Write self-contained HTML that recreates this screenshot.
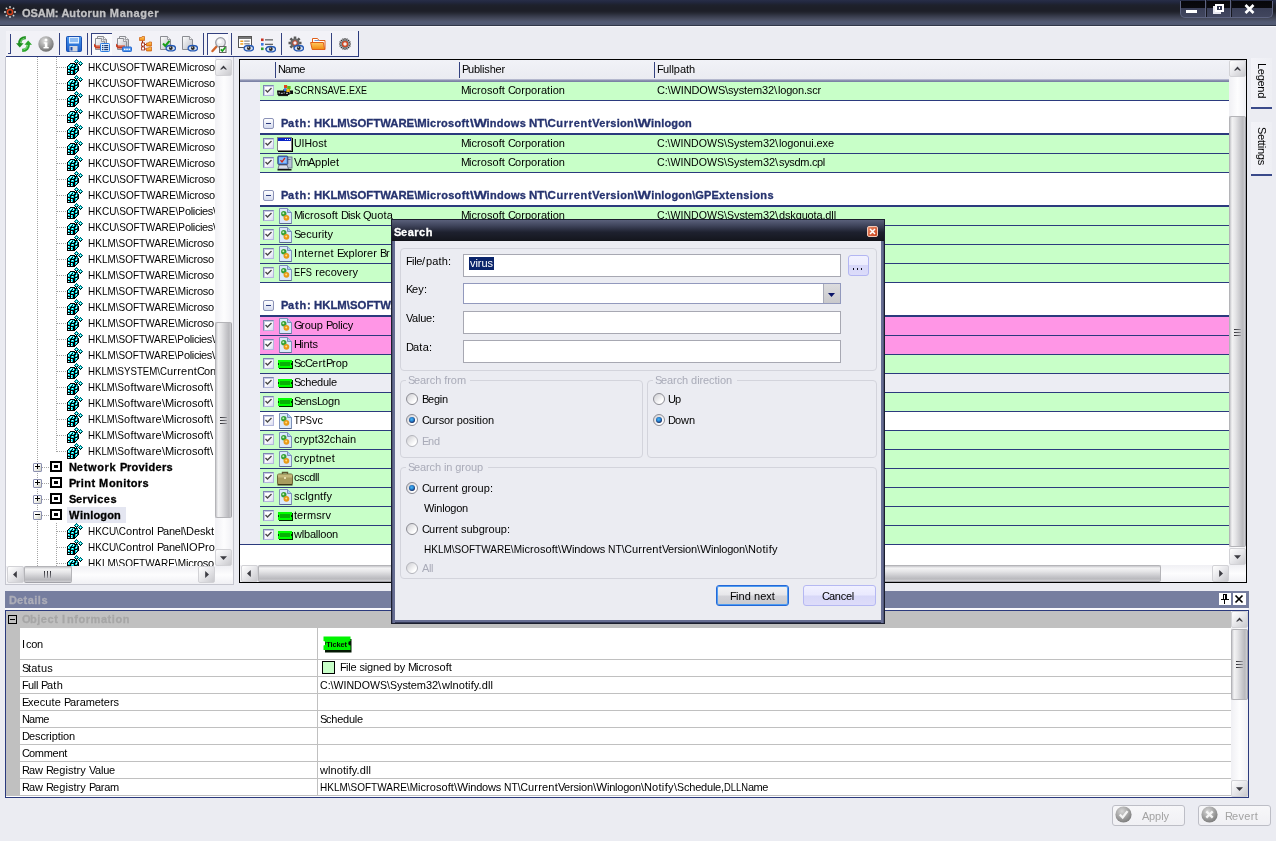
<!DOCTYPE html><html><head><meta charset="utf-8"><title>OSAM</title><style>
*{box-sizing:border-box}
html,body{margin:0;padding:0}
body{width:1276px;height:841px;overflow:hidden;background:#ebecf2;font-family:"Liberation Sans",sans-serif;font-size:11px;color:#000;position:relative;line-height:13px}
.a{position:absolute}
.t{position:absolute;white-space:nowrap;line-height:13px;height:13px;overflow:visible}
.b{font-weight:bold}
.clip{overflow:hidden}
.sbv{position:absolute;background:linear-gradient(90deg,#f0f0f4,#fdfdfe 50%,#f0f0f4)}
.sbh{position:absolute;background:linear-gradient(#f0f0f4,#fdfdfe 50%,#f0f0f4)}
.sbtn{position:absolute;background:linear-gradient(135deg,#ffffff 0%,#e9e9ec 45%,#c9c9cd 100%);border:1px solid #d2d2d6;border-radius:2px}
.thv{position:absolute;background:linear-gradient(90deg,#c6c6ca 0,#f3f3f4 14%,#e6e6e8 35%,#c6c6ca 70%,#b9b9bd 86%,#d0d0d4 100%);border:1px solid #b4b4b8;border-right-color:#a2a2a8;border-radius:2px}
.thh{position:absolute;background:linear-gradient(#c6c6ca 0,#f3f3f4 14%,#e6e6e8 35%,#c6c6ca 70%,#b9b9bd 86%,#d0d0d4 100%);border:1px solid #b4b4b8;border-bottom-color:#a2a2a8;border-radius:2px}
.reg{position:absolute;width:16px;height:16px}.reg::before{content:"";position:absolute;left:-1px;top:0;width:1px;height:1px;box-shadow:10px 0px 0 #006068,9px 1px 0 #006068,10px 1px 0 #00d8e0,11px 1px 0 #006068,8px 2px 0 #006068,9px 2px 0 #00d8e0,10px 2px 0 #e8ffff,11px 2px 0 #00d8e0,12px 2px 0 #006068,14px 2px 0 #006068,9px 3px 0 #000,10px 3px 0 #00d8e0,11px 3px 0 #000,13px 3px 0 #006068,14px 3px 0 #00d8e0,15px 3px 0 #006068,4px 4px 0 #000,5px 4px 0 #000,6px 4px 0 #000,7px 4px 0 #000,8px 4px 0 #000,10px 4px 0 #000,12px 4px 0 #006068,13px 4px 0 #00d8e0,14px 4px 0 #e8ffff,15px 4px 0 #00d8e0,16px 4px 0 #006068,3px 5px 0 #000,4px 5px 0 #00d8e0,5px 5px 0 #e8ffff,6px 5px 0 #00d8e0,7px 5px 0 #00d8e0,8px 5px 0 #000,9px 5px 0 #000,10px 5px 0 #000,11px 5px 0 #006068,13px 5px 0 #000,14px 5px 0 #00d8e0,15px 5px 0 #000,2px 6px 0 #000,3px 6px 0 #00d8e0,4px 6px 0 #e8ffff,5px 6px 0 #00d8e0,6px 6px 0 #000,7px 6px 0 #e8ffff,8px 6px 0 #00d8e0,9px 6px 0 #000,10px 6px 0 #00d8e0,11px 6px 0 #006068,14px 6px 0 #000,1px 7px 0 #000,2px 7px 0 #00d8e0,3px 7px 0 #00d8e0,4px 7px 0 #00d8e0,5px 7px 0 #000,6px 7px 0 #00d8e0,7px 7px 0 #00d8e0,8px 7px 0 #000,9px 7px 0 #000,10px 7px 0 #00d8e0,11px 7px 0 #006068,12px 7px 0 #000,1px 8px 0 #000,2px 8px 0 #e8ffff,3px 8px 0 #00d8e0,4px 8px 0 #000,5px 8px 0 #000,6px 8px 0 #000,7px 8px 0 #000,8px 8px 0 #000,9px 8px 0 #00d8e0,10px 8px 0 #e8ffff,11px 8px 0 #006068,12px 8px 0 #000,1px 9px 0 #000,2px 9px 0 #00d8e0,3px 9px 0 #00d8e0,4px 9px 0 #000,5px 9px 0 #00d8e0,6px 9px 0 #e8ffff,7px 9px 0 #00d8e0,8px 9px 0 #000,9px 9px 0 #00d8e0,10px 9px 0 #00d8e0,11px 9px 0 #000,12px 9px 0 #000,1px 10px 0 #000,2px 10px 0 #000,3px 10px 0 #000,4px 10px 0 #000,5px 10px 0 #00d8e0,6px 10px 0 #00d8e0,7px 10px 0 #00d8e0,8px 10px 0 #000,9px 10px 0 #000,10px 10px 0 #000,11px 10px 0 #006068,12px 10px 0 #000,1px 11px 0 #000,2px 11px 0 #e8ffff,3px 11px 0 #00d8e0,4px 11px 0 #000,5px 11px 0 #000,6px 11px 0 #000,7px 11px 0 #000,8px 11px 0 #000,9px 11px 0 #00d8e0,10px 11px 0 #e8ffff,11px 11px 0 #006068,12px 11px 0 #000,1px 12px 0 #000,2px 12px 0 #00d8e0,3px 12px 0 #00d8e0,4px 12px 0 #000,5px 12px 0 #e8ffff,6px 12px 0 #00d8e0,7px 12px 0 #000,8px 12px 0 #000,9px 12px 0 #00d8e0,10px 12px 0 #00d8e0,11px 12px 0 #000,1px 13px 0 #000,2px 13px 0 #000,3px 13px 0 #000,4px 13px 0 #000,5px 13px 0 #00d8e0,6px 13px 0 #00d8e0,7px 13px 0 #000,8px 13px 0 #000,9px 13px 0 #00d8e0,10px 13px 0 #000,1px 14px 0 #000,2px 14px 0 #e8ffff,3px 14px 0 #00d8e0,4px 14px 0 #000,5px 14px 0 #e8ffff,6px 14px 0 #00d8e0,7px 14px 0 #000,8px 14px 0 #000,9px 14px 0 #000,1px 15px 0 #000,2px 15px 0 #000,3px 15px 0 #000,4px 15px 0 #000,5px 15px 0 #000,6px 15px 0 #000,7px 15px 0 #000,8px 15px 0 #000}</style></head><body><div id="root" style="position:absolute;left:0;top:0;width:1276px;height:841px;will-change:transform"><div class="a" style="left:0px;top:0px;width:1276px;height:25px;background:linear-gradient(#282e48 0,#222840 8%,#1e212c 20%,#1d1f28 32%,#1d1f28 44%,#252832 52%,#363a4a 64%,#474c5e 76%,#525a74 88%,#525a72 100%)"></div>
<div class="t " style="left:22px;top:7px;color:#c2c2c4;font-weight:bold;-webkit-text-stroke:0.3px;"><span style="letter-spacing:-0.038px">OSAM:</span><span style="letter-spacing:-0.106px"> </span><span style="letter-spacing:-0.053px">A</span><span style="letter-spacing:0.362px">utorun </span><span style="letter-spacing:0.700px">M</span><span style="letter-spacing:0.555px">anager</span></div>
<svg class="a" style="left:4px;top:6px" width="12" height="12" viewBox="0 0 12 12"><g stroke="#d8d8d8" stroke-width="1.3"><path d="M6 0V12M0 6H12M1.8 1.8L10.2 10.2M10.2 1.8L1.8 10.2"/></g><circle cx="6" cy="6" r="4" fill="#2a2a2a"/><circle cx="6" cy="6" r="2.6" fill="none" stroke="#d8401c" stroke-width="1.5"/><circle cx="6" cy="6" r="1" fill="#111"/></svg>
<div class="a" style="left:1180px;top:1px;width:93px;height:17px;border:1px solid #5d6380;border-top:none;border-radius:0 0 5px 5px;background:linear-gradient(#07070a 0,#0a0a0e 7px,#3a3f57 7.5px,#41465e 100%)"></div>
<div class="a" style="left:1205px;top:0px;width:1px;height:17px;background:#5d6380"></div>
<div class="a" style="left:1206px;top:0px;width:1px;height:17px;background:#15161e"></div>
<div class="a" style="left:1230px;top:0px;width:1px;height:17px;background:#5d6380"></div>
<div class="a" style="left:1231px;top:0px;width:1px;height:17px;background:#15161e"></div>
<div class="a" style="left:1186px;top:10px;width:11px;height:3px;background:#fff"></div>
<svg class="a" style="left:1212px;top:3px" width="12" height="12" viewBox="0 0 12 12" shape-rendering="crispEdges"><rect x="1" y="3" width="8" height="8" fill="#e8e8f0"/><rect x="3" y="0.5" width="8.5" height="8.5" fill="#fff"/><rect x="5" y="2.5" width="4.5" height="4.5" fill="#343850"/><rect x="6.5" y="4" width="1.5" height="1.5" fill="#fff"/></svg>
<svg class="a" style="left:1244px;top:4px" width="11" height="10" viewBox="0 0 11 10"><path d="M1.5 1 L9.5 9 M9.5 1 L1.5 9" stroke="#fff" stroke-width="2.6"/></svg>
<div class="a" style="left:0px;top:25px;width:1276px;height:1px;background:#303648"></div>
<div class="a" style="left:0px;top:26px;width:1276px;height:1px;background:#f8f8fc"></div>
<div class="a" style="left:6px;top:31px;width:352px;height:26px;background:#f2f2f7"></div>
<div class="a" style="left:6px;top:56px;width:353px;height:1px;background:#2b3a7d"></div>
<div class="a" style="left:358px;top:31px;width:1px;height:26px;background:#2b3a7d"></div>
<div class="a" style="left:10px;top:34px;width:1px;height:20px;background:#33417f"></div>
<div class="a" style="left:8px;top:53px;width:3px;height:1px;background:#33417f"></div>
<div class="a" style="left:59px;top:33px;width:1px;height:22px;background:#33417f"></div>
<div class="a" style="left:87px;top:33px;width:1px;height:22px;background:#33417f"></div>
<div class="a" style="left:203px;top:33px;width:1px;height:22px;background:#33417f"></div>
<div class="a" style="left:231px;top:33px;width:1px;height:22px;background:#33417f"></div>
<div class="a" style="left:281px;top:33px;width:1px;height:22px;background:#33417f"></div>
<div class="a" style="left:331px;top:33px;width:1px;height:22px;background:#33417f"></div>
<div class="a" style="left:91px;top:33px;width:21px;height:22px;background:#f9f9fc;border-left:1px solid #33417f;border-top:1px solid #33417f"></div>
<div class="a" style="left:207px;top:33px;width:21px;height:22px;background:#f9f9fc;border-left:1px solid #33417f;border-top:1px solid #33417f"></div>
<svg width="0" height="0" style="position:absolute"><defs><linearGradient id="pgr" x1="0" y1="0" x2="1" y2="1"><stop offset="0" stop-color="#fff"/><stop offset="1" stop-color="#b9bcc4"/></linearGradient><radialGradient id="sph" cx=".4" cy=".3" r=".75"><stop offset="0" stop-color="#dcdcdc"/><stop offset="1" stop-color="#6a6a6a"/></radialGradient><linearGradient id="flo" x1="0" y1="0" x2="0" y2="1"><stop offset="0" stop-color="#4a9af0"/><stop offset="1" stop-color="#1a5cc8"/></linearGradient><linearGradient id="fol" x1="0" y1="0" x2="0" y2="1"><stop offset="0" stop-color="#ffc860"/><stop offset="1" stop-color="#f08a10"/></linearGradient></defs></svg>
<svg class="a" style="left:16px;top:36px" width="16" height="16" viewBox="0 0 16 16"><path d="M9.8 1.6 Q3.4 1.8 3.7 8.2" fill="none" stroke="#1f8f1f" stroke-width="3.2"/><path d="M0 7.3 H7.6 L3.8 11.6 Z" fill="#1f8f1f"/><path d="M6.2 14.4 Q12.6 14.2 12.3 7.8" fill="none" stroke="#2aa52a" stroke-width="3.2"/><path d="M8.5 8.7 H16 L12.2 4.4 Z" fill="#2aa52a"/><path d="M8.5 2.2 Q4.6 2.8 4.4 7" fill="none" stroke="#7ddc7d" stroke-width=".9"/><path d="M7.5 13.8 Q11.4 13.2 11.6 9" fill="none" stroke="#8ae48a" stroke-width=".9"/></svg>
<svg class="a" style="left:38px;top:36px" width="16" height="16" viewBox="0 0 16 16"><circle cx="8" cy="8" r="7.7" fill="url(#sph)"/><rect x="6.8" y="6.3" width="2.6" height="5.6" fill="#fff"/><rect x="5.7" y="6.3" width="2" height="1.3" fill="#fff"/><rect x="5.5" y="11" width="5.2" height="1.4" fill="#fff"/><circle cx="8" cy="3.9" r="1.5" fill="#fff"/></svg>
<svg class="a" style="left:66px;top:36px" width="16" height="16" viewBox="0 0 16 16"><rect x=".5" y=".5" width="15" height="15" rx="1" fill="url(#flo)" stroke="#1a4fb0"/><rect x="3" y="1" width="10" height="6.5" fill="#dfeeff"/><rect x="4" y="2.5" width="8" height="1" fill="#3c8ae8"/><rect x="4" y="4.5" width="8" height="1" fill="#3c8ae8"/><rect x="3.5" y="10" width="8" height="5.5" fill="#d5d8e0"/><rect x="4.5" y="11" width="2" height="3.5" fill="#1a4fb0"/></svg>
<svg class="a" style="left:94px;top:36px" width="16" height="16" viewBox="0 0 16 16"><path d="M3.5 0.5 H9.5 L12.5 3.5 V11.5 H3.5 Z" fill="url(#pgr)" stroke="#8a8c92"/><path d="M9.5 0.5 V3.5 H12.5" fill="#f4f4f4" stroke="#8a8c92" stroke-width=".8"/><path d="M1.5 2.5 H7.5 L10.5 5.5 V13.5 H1.5 Z" fill="url(#pgr)" stroke="#8a8c92"/><path d="M7.5 2.5 V5.5 H10.5" fill="#f4f4f4" stroke="#8a8c92" stroke-width=".8"/><path d="M0 7.5 L2 9.5 H9 V12.5 H2 L0 10.5 Z" fill="#c83c20"/><path d="M2 9.5 H9 V10.5 H2Z" fill="#e88a70"/><rect x="6.5" y="7.5" width="9" height="8" rx=".8" fill="#dceeff" stroke="#2a7ae0"/><g fill="#1c3c78"><rect x="8" y="9" width="1.4" height="1.2"/><rect x="10.2" y="9" width="4" height="1.2"/><rect x="8" y="11" width="1.4" height="1.2"/><rect x="10.2" y="11" width="4" height="1.2"/><rect x="8" y="13" width="1.4" height="1.2"/><rect x="10.2" y="13" width="4" height="1.2"/></g></svg>
<svg class="a" style="left:116px;top:36px" width="16" height="16" viewBox="0 0 16 16"><path d="M3.5 0.5 H9.5 L12.5 3.5 V11.5 H3.5 Z" fill="url(#pgr)" stroke="#8a8c92"/><path d="M9.5 0.5 V3.5 H12.5" fill="#f4f4f4" stroke="#8a8c92" stroke-width=".8"/><path d="M1.5 2.5 H7.5 L10.5 5.5 V13.5 H1.5 Z" fill="url(#pgr)" stroke="#8a8c92"/><path d="M7.5 2.5 V5.5 H10.5" fill="#f4f4f4" stroke="#8a8c92" stroke-width=".8"/><path d="M0 7.5 L2 9.5 H9 V12.5 H2 L0 10.5 Z" fill="#c83c20"/><path d="M2 9.5 H9 V10.5 H2Z" fill="#e88a70"/><rect x="6.5" y="11" width="9" height="4.5" rx=".8" fill="#4a94ec" stroke="#2a6ad0"/><g fill="#fff"><rect x="8" y="12.6" width="1.5" height="1.5"/><rect x="10.3" y="12.6" width="1.5" height="1.5"/><rect x="12.6" y="12.6" width="1.5" height="1.5"/></g></svg>
<svg class="a" style="left:138px;top:36px" width="16" height="16" viewBox="0 0 16 16"><path d="M4.5 4.5 V13 H8 M4.5 8.5 H8" fill="none" stroke="#a02810" stroke-width="1.1"/><rect x="3.6" y="7" width="3" height="3" fill="#fff" stroke="#a02810" stroke-width=".8"/><rect x="3.6" y="11" width="3" height="3" fill="#fff" stroke="#a02810" stroke-width=".8"/><path d="M1.5 1.5 H3.5 L4.1 0.5 H6.5 V4.5 H1.5 Z" fill="url(#fol)" stroke="#c85a10" stroke-width=".7"/><path d="M8.5 7 H10.5 L11.1 6 H13.5 V10 H8.5 Z" fill="url(#fol)" stroke="#c85a10" stroke-width=".7"/><path d="M8.5 12 H10.5 L11.1 11 H13.5 V15 H8.5 Z" fill="url(#fol)" stroke="#c85a10" stroke-width=".7"/></svg>
<svg class="a" style="left:160px;top:36px" width="16" height="16" viewBox="0 0 16 16"><path d="M0.5 0.5 H7.5 L10.5 3.5 V13.5 H0.5 Z" fill="url(#pgr)" stroke="#8a8c92"/><path d="M7.5 0.5 V3.5 H10.5" fill="#f4f4f4" stroke="#8a8c92" stroke-width=".8"/><path d="M3 7.5 L5.3 10 L9.5 4.8" fill="none" stroke="#18a018" stroke-width="2"/><ellipse cx="10.8" cy="12.2" rx="4.7" ry="2.7" fill="#d4e2f6" stroke="#2458b4" stroke-width="1.3"/><circle cx="10.8" cy="12.0" r="1.9" fill="#2a2a2a"/><circle cx="10.3" cy="11.299999999999999" r=".7" fill="#c8c8c8"/></svg>
<svg class="a" style="left:182px;top:36px" width="16" height="16" viewBox="0 0 16 16"><path d="M0.5 0.5 H7.5 L10.5 3.5 V13.5 H0.5 Z" fill="url(#pgr)" stroke="#8a8c92"/><path d="M7.5 0.5 V3.5 H10.5" fill="#f4f4f4" stroke="#8a8c92" stroke-width=".8"/><ellipse cx="10.8" cy="12.2" rx="4.7" ry="2.7" fill="#d4e2f6" stroke="#2458b4" stroke-width="1.3"/><circle cx="10.8" cy="12.0" r="1.9" fill="#2a2a2a"/><circle cx="10.3" cy="11.299999999999999" r=".7" fill="#c8c8c8"/></svg>
<svg class="a" style="left:211px;top:37px" width="16" height="16" viewBox="0 0 16 16"><path d="M1.5 14 L6.5 8.5" stroke="#d0642a" stroke-width="2.4" stroke-linecap="round"/><circle cx="9.5" cy="5.5" r="4.8" fill="#e9eaee" stroke="#9a9ca4" stroke-width="1.3"/><circle cx="8.6" cy="4.4" r="2.2" fill="#fff" opacity=".8"/><rect x="8.5" y="9.5" width="6.5" height="6" fill="#f4f4f4" stroke="#666" stroke-width="1"/><path d="M9.8 12.3 L11.4 14 L14.4 10.3" fill="none" stroke="#18a018" stroke-width="1.7"/></svg>
<svg class="a" style="left:238px;top:36px" width="16" height="16" viewBox="0 0 16 16"><rect x=".5" y=".5" width="13" height="11" fill="#fff" stroke="#555"/><rect x="1" y="1" width="12" height="2" fill="#777"/><rect x="2.3" y="4.5" width="3" height="1.5" fill="#f0a020"/><rect x="6.2" y="4.5" width="5.5" height="1.2" fill="#888"/><rect x="2.3" y="7.2" width="3" height="1.5" fill="#f0a020"/><rect x="6.2" y="7.2" width="5.5" height="1.2" fill="#888"/><ellipse cx="10.8" cy="12.2" rx="4.7" ry="2.7" fill="#d4e2f6" stroke="#2458b4" stroke-width="1.3"/><circle cx="10.8" cy="12.0" r="1.9" fill="#2a2a2a"/><circle cx="10.3" cy="11.299999999999999" r=".7" fill="#c8c8c8"/></svg>
<svg class="a" style="left:260px;top:37px" width="16" height="16" viewBox="0 0 16 16"><rect x="1" y="1.5" width="2.6" height="2.6" fill="#c83020"/><rect x="5" y="2.2" width="8" height="1.3" fill="#666"/><rect x="1" y="6" width="2.6" height="2.6" fill="#3a78e0"/><rect x="5" y="6.7" width="8" height="1.3" fill="#666"/><rect x="1" y="10.5" width="2.6" height="2.6" fill="#30a030"/><rect x="5" y="11.2" width="3" height="1.3" fill="#666"/><ellipse cx="10.8" cy="12.2" rx="4.7" ry="2.7" fill="#d4e2f6" stroke="#2458b4" stroke-width="1.3"/><circle cx="10.8" cy="12.0" r="1.9" fill="#2a2a2a"/><circle cx="10.3" cy="11.299999999999999" r=".7" fill="#c8c8c8"/></svg>
<svg class="a" style="left:288px;top:36px" width="16" height="16" viewBox="0 0 16 16"><g stroke="#5a5a5a" stroke-width="2.6"><path d="M7 .5V13.5M.5 7H13.5M2.4 2.4L11.6 11.6M11.6 2.4L2.4 11.6"/></g><circle cx="7" cy="7" r="4.6" fill="#6a6a6a"/><circle cx="7" cy="7" r="2.2" fill="#f2f2f7" stroke="#c83c20" stroke-width="1"/><ellipse cx="10.8" cy="12.2" rx="4.7" ry="2.7" fill="#d4e2f6" stroke="#2458b4" stroke-width="1.3"/><circle cx="10.8" cy="12.0" r="1.9" fill="#2a2a2a"/><circle cx="10.3" cy="11.299999999999999" r=".7" fill="#c8c8c8"/></svg>
<svg class="a" style="left:310px;top:36px" width="16" height="16" viewBox="0 0 16 16"><path d="M2.5 2.5 H7.5 L9 4.5 H15 V13.5 H2.5 Z" fill="#fff" stroke="#e0601a"/><rect x="4.5" y="4" width="5" height="1" fill="#7a9ad0"/><path d="M0.6 6.5 H13.4 L14.6 13.5 H2.2 Z" fill="url(#fol)" stroke="#e0601a"/></svg>
<svg class="a" style="left:339px;top:38px" width="12" height="12" viewBox="0 0 12 12"><g stroke="#2c2c2c" stroke-width="1.1" stroke-dasharray="2 8 2 0"><path d="M6 0V12M0 6H12M1.8 1.8L10.2 10.2M10.2 1.8L1.8 10.2M3.7 .5L8.3 11.5M8.3 .5L3.7 11.5M.5 3.7L11.5 8.3M.5 8.3L11.5 3.7"/></g><circle cx="6" cy="6" r="3.9" fill="#4a4a4a" opacity=".75"/><circle cx="6" cy="6" r="2.4" fill="#f4eeea" stroke="#d8441c" stroke-width="1.3"/></svg>
<div class="a" style="left:5px;top:57px;width:229px;height:528px;background:#fff;border:1px solid #c5c6cf;border-top:none"></div>
<div id="tree" class="a clip" style="left:6px;top:57px;width:209px;height:509px"><div class="a" style="left:31px;top:0px;width:1px;height:509px;background:repeating-linear-gradient(#a4a4a4 0 1px,transparent 1px 2px)"></div><div class="a" style="left:50px;top:0px;width:1px;height:395px;background:repeating-linear-gradient(#a4a4a4 0 1px,transparent 1px 2px)"></div><div class="a" style="left:51px;top:10px;width:10px;height:1px;background:repeating-linear-gradient(90deg,#a4a4a4 0 1px,transparent 1px 2px)"></div><i class="reg" style="left:61px;top:2px"></i><div class="t" style="left:82px;top:4px;"><span style="display:inline-block;width:99.00px;transform:scaleX(0.9135);transform-origin:0 0">HKCU\SOFTWARE\M</span><span style="letter-spacing:-0.224px">icroso</span></div><div class="a" style="left:51px;top:26px;width:10px;height:1px;background:repeating-linear-gradient(90deg,#a4a4a4 0 1px,transparent 1px 2px)"></div><i class="reg" style="left:61px;top:18px"></i><div class="t" style="left:82px;top:20px;"><span style="display:inline-block;width:99.00px;transform:scaleX(0.9135);transform-origin:0 0">HKCU\SOFTWARE\M</span><span style="letter-spacing:-0.224px">icroso</span></div><div class="a" style="left:51px;top:42px;width:10px;height:1px;background:repeating-linear-gradient(90deg,#a4a4a4 0 1px,transparent 1px 2px)"></div><i class="reg" style="left:61px;top:34px"></i><div class="t" style="left:82px;top:36px;"><span style="display:inline-block;width:99.00px;transform:scaleX(0.9135);transform-origin:0 0">HKCU\SOFTWARE\M</span><span style="letter-spacing:-0.224px">icroso</span></div><div class="a" style="left:51px;top:58px;width:10px;height:1px;background:repeating-linear-gradient(90deg,#a4a4a4 0 1px,transparent 1px 2px)"></div><i class="reg" style="left:61px;top:50px"></i><div class="t" style="left:82px;top:52px;"><span style="display:inline-block;width:99.00px;transform:scaleX(0.9135);transform-origin:0 0">HKCU\SOFTWARE\M</span><span style="letter-spacing:-0.224px">icroso</span></div><div class="a" style="left:51px;top:74px;width:10px;height:1px;background:repeating-linear-gradient(90deg,#a4a4a4 0 1px,transparent 1px 2px)"></div><i class="reg" style="left:61px;top:66px"></i><div class="t" style="left:82px;top:68px;"><span style="display:inline-block;width:99.00px;transform:scaleX(0.9135);transform-origin:0 0">HKCU\SOFTWARE\M</span><span style="letter-spacing:-0.224px">icroso</span></div><div class="a" style="left:51px;top:90px;width:10px;height:1px;background:repeating-linear-gradient(90deg,#a4a4a4 0 1px,transparent 1px 2px)"></div><i class="reg" style="left:61px;top:82px"></i><div class="t" style="left:82px;top:84px;"><span style="display:inline-block;width:99.00px;transform:scaleX(0.9135);transform-origin:0 0">HKCU\SOFTWARE\M</span><span style="letter-spacing:-0.224px">icroso</span></div><div class="a" style="left:51px;top:106px;width:10px;height:1px;background:repeating-linear-gradient(90deg,#a4a4a4 0 1px,transparent 1px 2px)"></div><i class="reg" style="left:61px;top:98px"></i><div class="t" style="left:82px;top:100px;"><span style="display:inline-block;width:99.00px;transform:scaleX(0.9135);transform-origin:0 0">HKCU\SOFTWARE\M</span><span style="letter-spacing:-0.224px">icroso</span></div><div class="a" style="left:51px;top:122px;width:10px;height:1px;background:repeating-linear-gradient(90deg,#a4a4a4 0 1px,transparent 1px 2px)"></div><i class="reg" style="left:61px;top:114px"></i><div class="t" style="left:82px;top:116px;"><span style="display:inline-block;width:99.00px;transform:scaleX(0.9135);transform-origin:0 0">HKCU\SOFTWARE\M</span><span style="letter-spacing:-0.224px">icroso</span></div><div class="a" style="left:51px;top:138px;width:10px;height:1px;background:repeating-linear-gradient(90deg,#a4a4a4 0 1px,transparent 1px 2px)"></div><i class="reg" style="left:61px;top:130px"></i><div class="t" style="left:82px;top:132px;"><span style="display:inline-block;width:99.00px;transform:scaleX(0.9135);transform-origin:0 0">HKCU\SOFTWARE\M</span><span style="letter-spacing:-0.224px">icroso</span></div><div class="a" style="left:51px;top:154px;width:10px;height:1px;background:repeating-linear-gradient(90deg,#a4a4a4 0 1px,transparent 1px 2px)"></div><i class="reg" style="left:61px;top:146px"></i><div class="t" style="left:82px;top:148px;"><span style="display:inline-block;width:97.00px;transform:scaleX(0.9103);transform-origin:0 0">HKCU\SOFTWARE\P</span><span style="letter-spacing:-0.366px">olicies</span><span style="letter-spacing:0.938px">\</span></div><div class="a" style="left:51px;top:170px;width:10px;height:1px;background:repeating-linear-gradient(90deg,#a4a4a4 0 1px,transparent 1px 2px)"></div><i class="reg" style="left:61px;top:162px"></i><div class="t" style="left:82px;top:164px;"><span style="display:inline-block;width:97.00px;transform:scaleX(0.9103);transform-origin:0 0">HKCU\SOFTWARE\P</span><span style="letter-spacing:-0.366px">olicies</span><span style="letter-spacing:0.938px">\</span></div><div class="a" style="left:51px;top:186px;width:10px;height:1px;background:repeating-linear-gradient(90deg,#a4a4a4 0 1px,transparent 1px 2px)"></div><i class="reg" style="left:61px;top:178px"></i><div class="t" style="left:82px;top:180px;"><span style="display:inline-block;width:98.00px;transform:scaleX(0.9092);transform-origin:0 0">HKLM\SOFTWARE\M</span><span style="letter-spacing:-0.224px">icroso</span></div><div class="a" style="left:51px;top:202px;width:10px;height:1px;background:repeating-linear-gradient(90deg,#a4a4a4 0 1px,transparent 1px 2px)"></div><i class="reg" style="left:61px;top:194px"></i><div class="t" style="left:82px;top:196px;"><span style="display:inline-block;width:98.00px;transform:scaleX(0.9092);transform-origin:0 0">HKLM\SOFTWARE\M</span><span style="letter-spacing:-0.224px">icroso</span></div><div class="a" style="left:51px;top:218px;width:10px;height:1px;background:repeating-linear-gradient(90deg,#a4a4a4 0 1px,transparent 1px 2px)"></div><i class="reg" style="left:61px;top:210px"></i><div class="t" style="left:82px;top:212px;"><span style="display:inline-block;width:98.00px;transform:scaleX(0.9092);transform-origin:0 0">HKLM\SOFTWARE\M</span><span style="letter-spacing:-0.224px">icroso</span></div><div class="a" style="left:51px;top:234px;width:10px;height:1px;background:repeating-linear-gradient(90deg,#a4a4a4 0 1px,transparent 1px 2px)"></div><i class="reg" style="left:61px;top:226px"></i><div class="t" style="left:82px;top:228px;"><span style="display:inline-block;width:98.00px;transform:scaleX(0.9092);transform-origin:0 0">HKLM\SOFTWARE\M</span><span style="letter-spacing:-0.224px">icroso</span></div><div class="a" style="left:51px;top:250px;width:10px;height:1px;background:repeating-linear-gradient(90deg,#a4a4a4 0 1px,transparent 1px 2px)"></div><i class="reg" style="left:61px;top:242px"></i><div class="t" style="left:82px;top:244px;"><span style="display:inline-block;width:98.00px;transform:scaleX(0.9092);transform-origin:0 0">HKLM\SOFTWARE\M</span><span style="letter-spacing:-0.224px">icroso</span></div><div class="a" style="left:51px;top:266px;width:10px;height:1px;background:repeating-linear-gradient(90deg,#a4a4a4 0 1px,transparent 1px 2px)"></div><i class="reg" style="left:61px;top:258px"></i><div class="t" style="left:82px;top:260px;"><span style="display:inline-block;width:98.00px;transform:scaleX(0.9092);transform-origin:0 0">HKLM\SOFTWARE\M</span><span style="letter-spacing:-0.224px">icroso</span></div><div class="a" style="left:51px;top:282px;width:10px;height:1px;background:repeating-linear-gradient(90deg,#a4a4a4 0 1px,transparent 1px 2px)"></div><i class="reg" style="left:61px;top:274px"></i><div class="t" style="left:82px;top:276px;"><span style="display:inline-block;width:96.00px;transform:scaleX(0.9059);transform-origin:0 0">HKLM\SOFTWARE\P</span><span style="letter-spacing:-0.366px">olicies</span><span style="letter-spacing:0.938px">\</span></div><div class="a" style="left:51px;top:298px;width:10px;height:1px;background:repeating-linear-gradient(90deg,#a4a4a4 0 1px,transparent 1px 2px)"></div><i class="reg" style="left:61px;top:290px"></i><div class="t" style="left:82px;top:292px;"><span style="display:inline-block;width:96.00px;transform:scaleX(0.9059);transform-origin:0 0">HKLM\SOFTWARE\P</span><span style="letter-spacing:-0.366px">olicies</span><span style="letter-spacing:0.938px">\</span></div><div class="a" style="left:51px;top:314px;width:10px;height:1px;background:repeating-linear-gradient(90deg,#a4a4a4 0 1px,transparent 1px 2px)"></div><i class="reg" style="left:61px;top:306px"></i><div class="t" style="left:82px;top:308px;"><span style="display:inline-block;width:79.00px;transform:scaleX(0.8790);transform-origin:0 0">HKLM\SYSTEM\C</span><span style="letter-spacing:0.208px">urrent</span><span style="letter-spacing:-0.938px">C</span><span style="letter-spacing:-0.125px">on</span></div><div class="a" style="left:51px;top:330px;width:10px;height:1px;background:repeating-linear-gradient(90deg,#a4a4a4 0 1px,transparent 1px 2px)"></div><i class="reg" style="left:61px;top:322px"></i><div class="t" style="left:82px;top:324px;"><span style="display:inline-block;width:36.00px;transform:scaleX(0.8787);transform-origin:0 0">HKLM\S</span><span style="letter-spacing:0.272px">oftware</span><span style="letter-spacing:-0.109px">\M</span><span style="letter-spacing:0.066px">icrosoft</span><span style="letter-spacing:0.938px">\</span></div><div class="a" style="left:51px;top:346px;width:10px;height:1px;background:repeating-linear-gradient(90deg,#a4a4a4 0 1px,transparent 1px 2px)"></div><i class="reg" style="left:61px;top:338px"></i><div class="t" style="left:82px;top:340px;"><span style="display:inline-block;width:36.00px;transform:scaleX(0.8787);transform-origin:0 0">HKLM\S</span><span style="letter-spacing:0.272px">oftware</span><span style="letter-spacing:-0.109px">\M</span><span style="letter-spacing:0.066px">icrosoft</span><span style="letter-spacing:0.938px">\</span></div><div class="a" style="left:51px;top:362px;width:10px;height:1px;background:repeating-linear-gradient(90deg,#a4a4a4 0 1px,transparent 1px 2px)"></div><i class="reg" style="left:61px;top:354px"></i><div class="t" style="left:82px;top:356px;"><span style="display:inline-block;width:36.00px;transform:scaleX(0.8787);transform-origin:0 0">HKLM\S</span><span style="letter-spacing:0.272px">oftware</span><span style="letter-spacing:-0.109px">\M</span><span style="letter-spacing:0.066px">icrosoft</span><span style="letter-spacing:0.938px">\</span></div><div class="a" style="left:51px;top:378px;width:10px;height:1px;background:repeating-linear-gradient(90deg,#a4a4a4 0 1px,transparent 1px 2px)"></div><i class="reg" style="left:61px;top:370px"></i><div class="t" style="left:82px;top:372px;"><span style="display:inline-block;width:36.00px;transform:scaleX(0.8787);transform-origin:0 0">HKLM\S</span><span style="letter-spacing:0.272px">oftware</span><span style="letter-spacing:-0.109px">\M</span><span style="letter-spacing:0.066px">icrosoft</span><span style="letter-spacing:0.938px">\</span></div><div class="a" style="left:51px;top:394px;width:10px;height:1px;background:repeating-linear-gradient(90deg,#a4a4a4 0 1px,transparent 1px 2px)"></div><i class="reg" style="left:61px;top:386px"></i><div class="t" style="left:82px;top:388px;"><span style="display:inline-block;width:36.00px;transform:scaleX(0.8787);transform-origin:0 0">HKLM\S</span><span style="letter-spacing:0.272px">oftware</span><span style="letter-spacing:-0.109px">\M</span><span style="letter-spacing:0.066px">icrosoft</span><span style="letter-spacing:0.938px">\</span></div><div class="a" style="left:36px;top:410px;width:8px;height:1px;background:repeating-linear-gradient(90deg,#a4a4a4 0 1px,transparent 1px 2px)"></div><div class="a" style="left:27px;top:406px;width:9px;height:9px;border:1px solid #8b90b0;border-radius:1px;background:linear-gradient(135deg,#fff 30%,#cfd0c4)"><div class="a" style="left:-1px;top:-1px;width:9px;height:9px"><div class="a" style="left:2px;top:3px;width:5px;height:1px;background:#000"></div><div class="a" style="left:4px;top:1px;width:1px;height:5px;background:#000"></div></div></div><div class="a" style="left:44px;top:404px;width:12px;height:11px;border:2px solid #000;background:#fff"><div class="a" style="left:2px;top:2px;width:4px;height:3px;background:#000"></div></div><div class="t" style="left:63px;top:404px;font-weight:bold;-webkit-text-stroke:0.3px;"><span style="letter-spacing:-0.088px">N</span><span style="letter-spacing:0.663px">etwork </span><span style="letter-spacing:-0.476px">P</span><span style="letter-spacing:0.334px">roviders</span></div><div class="a" style="left:36px;top:426px;width:8px;height:1px;background:repeating-linear-gradient(90deg,#a4a4a4 0 1px,transparent 1px 2px)"></div><div class="a" style="left:27px;top:422px;width:9px;height:9px;border:1px solid #8b90b0;border-radius:1px;background:linear-gradient(135deg,#fff 30%,#cfd0c4)"><div class="a" style="left:-1px;top:-1px;width:9px;height:9px"><div class="a" style="left:2px;top:3px;width:5px;height:1px;background:#000"></div><div class="a" style="left:4px;top:1px;width:1px;height:5px;background:#000"></div></div></div><div class="a" style="left:44px;top:420px;width:12px;height:11px;border:2px solid #000;background:#fff"><div class="a" style="left:2px;top:2px;width:4px;height:3px;background:#000"></div></div><div class="t" style="left:63px;top:420px;font-weight:bold;-webkit-text-stroke:0.3px;"><span style="letter-spacing:-0.344px">P</span><span style="letter-spacing:0.444px">rint </span><span style="letter-spacing:0.844px">M</span><span style="letter-spacing:0.388px">onitors</span></div><div class="a" style="left:36px;top:442px;width:8px;height:1px;background:repeating-linear-gradient(90deg,#a4a4a4 0 1px,transparent 1px 2px)"></div><div class="a" style="left:27px;top:438px;width:9px;height:9px;border:1px solid #8b90b0;border-radius:1px;background:linear-gradient(135deg,#fff 30%,#cfd0c4)"><div class="a" style="left:-1px;top:-1px;width:9px;height:9px"><div class="a" style="left:2px;top:3px;width:5px;height:1px;background:#000"></div><div class="a" style="left:4px;top:1px;width:1px;height:5px;background:#000"></div></div></div><div class="a" style="left:44px;top:436px;width:12px;height:11px;border:2px solid #000;background:#fff"><div class="a" style="left:2px;top:2px;width:4px;height:3px;background:#000"></div></div><div class="t" style="left:63px;top:436px;font-weight:bold;-webkit-text-stroke:0.3px;"><span style="letter-spacing:-0.344px">S</span><span style="letter-spacing:0.433px">ervices</span></div><div class="a" style="left:36px;top:458px;width:8px;height:1px;background:repeating-linear-gradient(90deg,#a4a4a4 0 1px,transparent 1px 2px)"></div><div class="a" style="left:27px;top:454px;width:9px;height:9px;border:1px solid #8b90b0;border-radius:1px;background:linear-gradient(135deg,#fff 30%,#cfd0c4)"><div class="a" style="left:-1px;top:-1px;width:9px;height:9px"><div class="a" style="left:2px;top:3px;width:5px;height:1px;background:#000"></div></div></div><div class="a" style="left:44px;top:452px;width:12px;height:11px;border:2px solid #000;background:#fff"><div class="a" style="left:2px;top:2px;width:4px;height:3px;background:#000"></div></div><div class="a" style="left:61px;top:450px;width:59px;height:16px;background:#e4e6f1"></div><div class="t" style="left:63px;top:452px;font-weight:bold;-webkit-text-stroke:0.3px;"><span style="letter-spacing:0.625px">W</span><span style="letter-spacing:0.183px">inlogon</span></div><div class="a" style="left:50px;top:466px;width:1px;height:43px;background:repeating-linear-gradient(#a4a4a4 0 1px,transparent 1px 2px)"></div><div class="a" style="left:51px;top:474px;width:10px;height:1px;background:repeating-linear-gradient(90deg,#a4a4a4 0 1px,transparent 1px 2px)"></div><i class="reg" style="left:61px;top:466px"></i><div class="t" style="left:82px;top:468px;"><span style="display:inline-block;width:38.00px;transform:scaleX(0.9014);transform-origin:0 0">HKCU\C</span><span style="letter-spacing:0.058px">ontrol </span><span style="letter-spacing:-1.344px">P</span><span style="letter-spacing:-0.203px">anel</span><span style="letter-spacing:0.000px">\D</span><span style="letter-spacing:-0.047px">eskt</span></div><div class="a" style="left:51px;top:490px;width:10px;height:1px;background:repeating-linear-gradient(90deg,#a4a4a4 0 1px,transparent 1px 2px)"></div><i class="reg" style="left:61px;top:482px"></i><div class="t" style="left:82px;top:484px;"><span style="display:inline-block;width:38.00px;transform:scaleX(0.9014);transform-origin:0 0">HKCU\C</span><span style="letter-spacing:0.058px">ontrol </span><span style="letter-spacing:-1.344px">P</span><span style="letter-spacing:-0.203px">anel</span><span style="letter-spacing:-0.008px">\IOP</span><span style="letter-spacing:0.109px">ro</span></div><div class="a" style="left:51px;top:506px;width:10px;height:1px;background:repeating-linear-gradient(90deg,#a4a4a4 0 1px,transparent 1px 2px)"></div><i class="reg" style="left:61px;top:498px"></i><div class="t" style="left:82px;top:500px;"><span style="display:inline-block;width:98.00px;transform:scaleX(0.9092);transform-origin:0 0">HKLM\SOFTWARE\M</span><span style="letter-spacing:-0.224px">icroso</span></div></div>
<div class="sbv" style="left:215px;top:57px;width:18px;height:509px"></div>
<div class="sbtn" style="left:215px;top:59px;width:17px;height:17px"><svg class="a" style="left:50%;top:50%;margin:-3px 0 0 -4px" width="7" height="5" viewBox="0 0 7 5"><path d="M0 4.4 L3.5 0.6 L7 4.4 L5.4 4.6 L3.5 3.1 L1.6 4.6 Z" fill="#3a3a40"/></svg></div>
<div class="thv" style="left:215px;top:322px;width:17px;height:196px"></div>
<div class="a" style="left:220px;top:417px;width:7px;height:1px;background:linear-gradient(90deg,#2e2e33,#6e6e74 70%,#a0a0a6)"></div>
<div class="a" style="left:220px;top:420px;width:7px;height:1px;background:linear-gradient(90deg,#2e2e33,#6e6e74 70%,#a0a0a6)"></div>
<div class="a" style="left:220px;top:423px;width:7px;height:1px;background:linear-gradient(90deg,#2e2e33,#6e6e74 70%,#a0a0a6)"></div>
<div class="sbtn" style="left:215px;top:549px;width:17px;height:17px"><svg class="a" style="left:50%;top:50%;margin:-2px 0 0 -4px" width="7" height="4" viewBox="0 0 7 4"><path d="M0 0.2 H7 L3.5 4 Z" fill="#3c3c42"/></svg></div>
<div class="sbh" style="left:6px;top:566px;width:227px;height:18px"></div>
<div class="sbtn" style="left:7px;top:566px;width:17px;height:17px"><svg class="a" style="left:50%;top:50%;margin:-4px 0 0 -3px" width="4" height="7" viewBox="0 0 4 7"><path d="M3.8 0 V7 L0 3.5 Z" fill="#3c3c42"/></svg></div>
<div class="thh" style="left:24px;top:566px;width:48px;height:17px"></div>
<div class="a" style="left:44px;top:571px;width:1px;height:7px;background:linear-gradient(#2e2e33,#6e6e74 70%,#a0a0a6)"></div>
<div class="a" style="left:47px;top:571px;width:1px;height:7px;background:linear-gradient(#2e2e33,#6e6e74 70%,#a0a0a6)"></div>
<div class="a" style="left:50px;top:571px;width:1px;height:7px;background:linear-gradient(#2e2e33,#6e6e74 70%,#a0a0a6)"></div>
<div class="sbtn" style="left:198px;top:566px;width:17px;height:17px"><svg class="a" style="left:50%;top:50%;margin:-4px 0 0 -2px" width="4" height="7" viewBox="0 0 4 7"><path d="M0.2 0 V7 L4 3.5 Z" fill="#3c3c42"/></svg></div>
<div class="a" style="left:239px;top:59px;width:1008px;height:524px;background:#fff;border:1px solid #000"></div>
<div class="a" style="left:240px;top:60px;width:989px;height:20px;background:linear-gradient(#f1f2f7,#eaebf1)"></div>
<div class="a" style="left:240px;top:79px;width:989px;height:3px;background:linear-gradient(#c9cbdc,#7f86a8 60%,#7a81a4)"></div>
<div class="a" style="left:275px;top:62px;width:1px;height:16px;background:#33417f"></div>
<div class="a" style="left:459px;top:62px;width:1px;height:16px;background:#33417f"></div>
<div class="a" style="left:654px;top:62px;width:1px;height:16px;background:#33417f"></div>
<div class="t " style="left:278px;top:63px;color:#000;"><span style="letter-spacing:-0.938px">N</span><span style="letter-spacing:-0.469px">ame</span></div>
<div class="t " style="left:462px;top:63px;color:#000;"><span style="letter-spacing:-1.344px">P</span><span style="letter-spacing:-0.191px">ublisher</span></div>
<div class="t " style="left:657px;top:63px;color:#000;"><span style="letter-spacing:-0.719px">F</span><span style="letter-spacing:-0.062px">ullpath</span></div>
<div class="a" style="left:240px;top:82px;width:20px;height:463px;background:#ecedf4"></div>
<div class="a" style="left:260px;top:82px;width:969px;height:18px;background:#c8ffc8"></div>
<div class="a" style="left:260px;top:100px;width:969px;height:1px;background:#2b3a7d"></div>
<div class="a" style="left:263px;top:85px;width:11px;height:11px;border:1px solid;border-color:#7d85b2 #b4b8dc #b4b8dc #7d85b2;box-shadow:inset 1px 1px 0 #c9cce4;background:linear-gradient(135deg,#fff 45%,#d9daf0)"><svg class="a" style="left:0;top:0" width="9" height="9" viewBox="0 0 9 9"><path d="M1.5 4 L3.5 6 L7.5 2" fill="none" stroke="#4a4a4a" stroke-width="1.4"/></svg></div>
<svg class="a" style="left:277px;top:85px" width="16" height="12" viewBox="0 0 16 12"><path d="M0 5.6 H6.5 V4 H13 V5.6 H16 V9 H12.5 V10 H0.5 Z" fill="#0c0c0c"/><rect x="1.2" y="10" width="9.8" height="1.1" fill="#1a1a1a"/><rect x="7" y="0" width="3.2" height="3.2" fill="#e2481c"/><rect x="10.2" y="1" width="3.4" height="3" fill="#58b818"/><rect x="7" y="3.2" width="2.6" height="3" fill="#3a78e8"/><rect x="9.4" y="4" width="3.4" height="3" fill="#f0b818"/><g fill="#c8c8c8"><rect x="1.5" y="7.4" width="1.5" height="1"/><rect x="3.8" y="7.8" width="2" height="1"/><rect x="6.6" y="7.4" width="1.2" height="1"/><rect x="9" y="7.8" width="2" height="1"/><rect x="12" y="7.4" width="1.4" height=".8"/></g></svg>
<div class="t " style="left:294px;top:84px;color:#000;"><span style="display:inline-block;width:52.00px;transform:scaleX(0.8707);transform-origin:0 0">SCRNSAVE</span><span style="letter-spacing:-0.062px">.</span><span style="display:inline-block;width:18.00px;transform:scaleX(0.8170);transform-origin:0 0">EXE</span></div>
<div class="t " style="left:461px;top:84px;color:#000;"><span style="letter-spacing:-1.156px">M</span><span style="letter-spacing:0.052px">icrosoft </span><span style="letter-spacing:-0.938px">C</span><span style="letter-spacing:0.044px">orporation</span></div>
<div class="t " style="left:657px;top:84px;color:#000;"><span style="letter-spacing:-0.156px">C:\WINDOWS\</span><span style="letter-spacing:-0.137px">system32</span><span style="letter-spacing:0.938px">\</span><span style="letter-spacing:-0.184px">logon.scr</span></div>
<div class="a" style="left:260px;top:133px;width:969px;height:2px;background:#2b3a7d"></div>
<div class="a" style="left:263px;top:118px;width:11px;height:11px;border:1px solid #8c93b8;border-radius:2px;background:linear-gradient(#fff,#d4daee)"><div class="a" style="left:2px;top:4px;width:5px;height:1px;background:#2b3a7d"></div></div>
<div class="t " style="left:281px;top:117px;color:#26336f;font-weight:bold;-webkit-text-stroke:0.3px;"><span style="letter-spacing:-0.361px">P</span><span style="letter-spacing:0.818px">ath</span><span style="letter-spacing:0.334px">:</span><span style="letter-spacing:-0.070px"> </span><span style="display:inline-block;width:112.73px;transform:scaleX(1.0308);transform-origin:0 0">HKLM\SOFTWARE\M</span><span style="letter-spacing:0.319px">icrosoft</span><span style="display:inline-block;width:16.96px;transform:scaleX(1.2620);transform-origin:0 0">\W</span><span style="letter-spacing:0.275px">indows </span><span style="display:inline-block;width:26.93px;transform:scaleX(1.0498);transform-origin:0 0">NT\C</span><span style="letter-spacing:0.689px">urrent</span><span style="letter-spacing:-0.361px">V</span><span style="letter-spacing:0.314px">ersion</span><span style="display:inline-block;width:16.96px;transform:scaleX(1.2620);transform-origin:0 0">\W</span><span style="letter-spacing:0.169px">inlogon</span></div>
<div class="a" style="left:260px;top:135px;width:969px;height:18px;background:#c8ffc8"></div>
<div class="a" style="left:260px;top:153px;width:969px;height:1px;background:#2b3a7d"></div>
<div class="a" style="left:263px;top:138px;width:11px;height:11px;border:1px solid;border-color:#7d85b2 #b4b8dc #b4b8dc #7d85b2;box-shadow:inset 1px 1px 0 #c9cce4;background:linear-gradient(135deg,#fff 45%,#d9daf0)"><svg class="a" style="left:0;top:0" width="9" height="9" viewBox="0 0 9 9"><path d="M1.5 4 L3.5 6 L7.5 2" fill="none" stroke="#4a4a4a" stroke-width="1.4"/></svg></div>
<svg class="a" style="left:277px;top:137px" width="16" height="15" viewBox="0 0 16 15" shape-rendering="crispEdges"><rect x="1" y="1" width="15" height="14" fill="#000"/><rect x="0" y="0" width="15" height="14" fill="#808080"/><rect x="1" y="1" width="13" height="12" fill="#fff"/><rect x="1" y="1" width="13" height="3" fill="#0a24c8"/><rect x="8" y="2" width="1" height="1" fill="#fff"/><rect x="10" y="2" width="1" height="1" fill="#fff"/><rect x="12" y="2" width="1" height="1" fill="#fff"/></svg>
<div class="t " style="left:294px;top:137px;color:#000;"><span style="display:inline-block;width:18.00px;transform:scaleX(0.9505);transform-origin:0 0">UIH</span><span style="letter-spacing:0.104px">ost</span></div>
<div class="t " style="left:461px;top:137px;color:#000;"><span style="letter-spacing:-1.156px">M</span><span style="letter-spacing:0.052px">icrosoft </span><span style="letter-spacing:-0.938px">C</span><span style="letter-spacing:0.044px">orporation</span></div>
<div class="t " style="left:657px;top:137px;color:#000;"><span style="display:inline-block;width:77.00px;transform:scaleX(0.9617);transform-origin:0 0">C:\WINDOWS\S</span><span style="letter-spacing:-0.085px">ystem32</span><span style="letter-spacing:0.938px">\</span><span style="letter-spacing:-0.119px">logonui.exe</span></div>
<div class="a" style="left:260px;top:154px;width:969px;height:18px;background:#c8ffc8"></div>
<div class="a" style="left:260px;top:172px;width:969px;height:1px;background:#2b3a7d"></div>
<div class="a" style="left:263px;top:157px;width:11px;height:11px;border:1px solid;border-color:#7d85b2 #b4b8dc #b4b8dc #7d85b2;box-shadow:inset 1px 1px 0 #c9cce4;background:linear-gradient(135deg,#fff 45%,#d9daf0)"><svg class="a" style="left:0;top:0" width="9" height="9" viewBox="0 0 9 9"><path d="M1.5 4 L3.5 6 L7.5 2" fill="none" stroke="#4a4a4a" stroke-width="1.4"/></svg></div>
<svg class="a" style="left:277px;top:155px" width="16" height="16" viewBox="0 0 16 16"><rect x="9" y="2" width="6" height="11" fill="#b9c3d6" stroke="#5b6785" stroke-width=".8"/><rect x="10.5" y="4" width="3" height="1" fill="#6b7690"/><rect x="0.8" y="1" width="10" height="8.5" rx="1" fill="#3f7be0" stroke="#39456a" stroke-width=".9"/><rect x="2" y="2.2" width="7.6" height="6" fill="#8fc0f8"/><path d="M3.5 5.2 L5 7 L8 2.8" fill="none" stroke="#d02818" stroke-width="1.3"/><path d="M2 10 H10 L11.5 14 H1 Z" fill="#d8dce8" stroke="#4a5068" stroke-width=".7"/><rect x="0.5" y="14" width="14" height="1.5" fill="#111"/></svg>
<div class="t " style="left:294px;top:156px;color:#000;"><span style="letter-spacing:-1.344px">V</span><span style="letter-spacing:-1.156px">m</span><span style="letter-spacing:-0.344px">A</span><span style="letter-spacing:0.025px">pplet</span></div>
<div class="t " style="left:461px;top:156px;color:#000;"><span style="letter-spacing:-1.156px">M</span><span style="letter-spacing:0.052px">icrosoft </span><span style="letter-spacing:-0.938px">C</span><span style="letter-spacing:0.044px">orporation</span></div>
<div class="t " style="left:657px;top:156px;color:#000;"><span style="display:inline-block;width:77.00px;transform:scaleX(0.9617);transform-origin:0 0">C:\WINDOWS\S</span><span style="letter-spacing:-0.085px">ystem32</span><span style="letter-spacing:0.938px">\</span><span style="letter-spacing:-0.323px">sysdm.cpl</span></div>
<div class="a" style="left:260px;top:205px;width:969px;height:2px;background:#2b3a7d"></div>
<div class="a" style="left:263px;top:190px;width:11px;height:11px;border:1px solid #8c93b8;border-radius:2px;background:linear-gradient(#fff,#d4daee)"><div class="a" style="left:2px;top:4px;width:5px;height:1px;background:#2b3a7d"></div></div>
<div class="t " style="left:281px;top:189px;color:#26336f;font-weight:bold;-webkit-text-stroke:0.3px;"><span style="letter-spacing:-0.358px">P</span><span style="letter-spacing:0.821px">ath</span><span style="letter-spacing:0.336px">:</span><span style="letter-spacing:-0.069px"> </span><span style="display:inline-block;width:112.77px;transform:scaleX(1.0312);transform-origin:0 0">HKLM\SOFTWARE\M</span><span style="letter-spacing:0.321px">icrosoft</span><span style="display:inline-block;width:16.97px;transform:scaleX(1.2626);transform-origin:0 0">\W</span><span style="letter-spacing:0.278px">indows </span><span style="display:inline-block;width:26.95px;transform:scaleX(1.0502);transform-origin:0 0">NT\C</span><span style="letter-spacing:0.691px">urrent</span><span style="letter-spacing:-0.358px">V</span><span style="letter-spacing:0.316px">ersion</span><span style="display:inline-block;width:16.97px;transform:scaleX(1.2626);transform-origin:0 0">\W</span><span style="letter-spacing:0.171px">inlogon</span><span style="letter-spacing:0.158px">\GPE</span><span style="letter-spacing:0.390px">xtensions</span></div>
<div class="a" style="left:260px;top:207px;width:969px;height:18px;background:#c8ffc8"></div>
<div class="a" style="left:260px;top:225px;width:969px;height:1px;background:#2b3a7d"></div>
<div class="a" style="left:263px;top:210px;width:11px;height:11px;border:1px solid;border-color:#7d85b2 #b4b8dc #b4b8dc #7d85b2;box-shadow:inset 1px 1px 0 #c9cce4;background:linear-gradient(135deg,#fff 45%,#d9daf0)"><svg class="a" style="left:0;top:0" width="9" height="9" viewBox="0 0 9 9"><path d="M1.5 4 L3.5 6 L7.5 2" fill="none" stroke="#4a4a4a" stroke-width="1.4"/></svg></div>
<svg class="a" style="left:279px;top:208px" width="13" height="16" viewBox="0 0 13 16"><path d="M0.5 0.5 H8.5 L12.5 4.5 V15.5 H0.5 Z" fill="#dbe9fb" stroke="#7d90b8"/><path d="M8.5 0.5 V4.5 H12.5" fill="#a8ccf5" stroke="#7d90b8"/><circle cx="4.8" cy="5.8" r="2.7" fill="#35a035"/><circle cx="4.3" cy="5.2" r="1" fill="#c8f0c0"/><circle cx="7.4" cy="9.8" r="2.9" fill="#e89a18"/><circle cx="7.2" cy="9.6" r="1" fill="#ffe080"/><path d="M0.5 15.5 H12.5" stroke="#5a6a90"/></svg>
<div class="t " style="left:294px;top:209px;color:#000;"><span style="letter-spacing:-1.156px">M</span><span style="letter-spacing:0.052px">icrosoft </span><span style="letter-spacing:-0.938px">D</span><span style="letter-spacing:-0.375px">isk </span><span style="letter-spacing:-0.562px">Q</span><span style="letter-spacing:0.141px">uota</span></div>
<div class="t " style="left:461px;top:209px;color:#000;"><span style="letter-spacing:-1.156px">M</span><span style="letter-spacing:0.052px">icrosoft </span><span style="letter-spacing:-0.938px">C</span><span style="letter-spacing:0.044px">orporation</span></div>
<div class="t " style="left:657px;top:209px;color:#000;"><span style="display:inline-block;width:77.00px;transform:scaleX(0.9617);transform-origin:0 0">C:\WINDOWS\S</span><span style="letter-spacing:-0.085px">ystem32</span><span style="letter-spacing:0.938px">\</span><span style="letter-spacing:-0.146px">dskquota.dll</span></div>
<div class="a" style="left:260px;top:226px;width:969px;height:18px;background:#c8ffc8"></div>
<div class="a" style="left:260px;top:244px;width:969px;height:1px;background:#2b3a7d"></div>
<div class="a" style="left:263px;top:229px;width:11px;height:11px;border:1px solid;border-color:#7d85b2 #b4b8dc #b4b8dc #7d85b2;box-shadow:inset 1px 1px 0 #c9cce4;background:linear-gradient(135deg,#fff 45%,#d9daf0)"><svg class="a" style="left:0;top:0" width="9" height="9" viewBox="0 0 9 9"><path d="M1.5 4 L3.5 6 L7.5 2" fill="none" stroke="#4a4a4a" stroke-width="1.4"/></svg></div>
<svg class="a" style="left:279px;top:227px" width="13" height="16" viewBox="0 0 13 16"><path d="M0.5 0.5 H8.5 L12.5 4.5 V15.5 H0.5 Z" fill="#dbe9fb" stroke="#7d90b8"/><path d="M8.5 0.5 V4.5 H12.5" fill="#a8ccf5" stroke="#7d90b8"/><circle cx="4.8" cy="5.8" r="2.7" fill="#35a035"/><circle cx="4.3" cy="5.2" r="1" fill="#c8f0c0"/><circle cx="7.4" cy="9.8" r="2.9" fill="#e89a18"/><circle cx="7.2" cy="9.6" r="1" fill="#ffe080"/><path d="M0.5 15.5 H12.5" stroke="#5a6a90"/></svg>
<div class="t " style="left:294px;top:228px;color:#000;"><span style="letter-spacing:-1.344px">S</span><span style="letter-spacing:0.085px">ecurity</span></div>
<div class="a" style="left:260px;top:245px;width:969px;height:18px;background:#c8ffc8"></div>
<div class="a" style="left:260px;top:263px;width:969px;height:1px;background:#2b3a7d"></div>
<div class="a" style="left:263px;top:248px;width:11px;height:11px;border:1px solid;border-color:#7d85b2 #b4b8dc #b4b8dc #7d85b2;box-shadow:inset 1px 1px 0 #c9cce4;background:linear-gradient(135deg,#fff 45%,#d9daf0)"><svg class="a" style="left:0;top:0" width="9" height="9" viewBox="0 0 9 9"><path d="M1.5 4 L3.5 6 L7.5 2" fill="none" stroke="#4a4a4a" stroke-width="1.4"/></svg></div>
<svg class="a" style="left:279px;top:246px" width="13" height="16" viewBox="0 0 13 16"><path d="M0.5 0.5 H8.5 L12.5 4.5 V15.5 H0.5 Z" fill="#dbe9fb" stroke="#7d90b8"/><path d="M8.5 0.5 V4.5 H12.5" fill="#a8ccf5" stroke="#7d90b8"/><circle cx="4.8" cy="5.8" r="2.7" fill="#35a035"/><circle cx="4.3" cy="5.2" r="1" fill="#c8f0c0"/><circle cx="7.4" cy="9.8" r="2.9" fill="#e89a18"/><circle cx="7.2" cy="9.6" r="1" fill="#ffe080"/><path d="M0.5 15.5 H12.5" stroke="#5a6a90"/></svg>
<div class="t " style="left:294px;top:247px;color:#000;"><span style="letter-spacing:0.938px">I</span><span style="letter-spacing:0.207px">nternet </span><span style="letter-spacing:-1.344px">E</span><span style="letter-spacing:0.039px">xplorer </span><span style="letter-spacing:-1.344px">B</span><span style="letter-spacing:0.344px">r</span></div>
<div class="a" style="left:260px;top:264px;width:969px;height:18px;background:#c8ffc8"></div>
<div class="a" style="left:260px;top:282px;width:969px;height:1px;background:#2b3a7d"></div>
<div class="a" style="left:263px;top:267px;width:11px;height:11px;border:1px solid;border-color:#7d85b2 #b4b8dc #b4b8dc #7d85b2;box-shadow:inset 1px 1px 0 #c9cce4;background:linear-gradient(135deg,#fff 45%,#d9daf0)"><svg class="a" style="left:0;top:0" width="9" height="9" viewBox="0 0 9 9"><path d="M1.5 4 L3.5 6 L7.5 2" fill="none" stroke="#4a4a4a" stroke-width="1.4"/></svg></div>
<svg class="a" style="left:279px;top:265px" width="13" height="16" viewBox="0 0 13 16"><path d="M0.5 0.5 H8.5 L12.5 4.5 V15.5 H0.5 Z" fill="#dbe9fb" stroke="#7d90b8"/><path d="M8.5 0.5 V4.5 H12.5" fill="#a8ccf5" stroke="#7d90b8"/><circle cx="4.8" cy="5.8" r="2.7" fill="#35a035"/><circle cx="4.3" cy="5.2" r="1" fill="#c8f0c0"/><circle cx="7.4" cy="9.8" r="2.9" fill="#e89a18"/><circle cx="7.2" cy="9.6" r="1" fill="#ffe080"/><path d="M0.5 15.5 H12.5" stroke="#5a6a90"/></svg>
<div class="t " style="left:294px;top:266px;color:#000;"><span style="display:inline-block;width:18.00px;transform:scaleX(0.8409);transform-origin:0 0">EFS</span><span style="letter-spacing:0.083px"> recovery</span></div>
<div class="a" style="left:260px;top:315px;width:969px;height:2px;background:#2b3a7d"></div>
<div class="a" style="left:263px;top:300px;width:11px;height:11px;border:1px solid #8c93b8;border-radius:2px;background:linear-gradient(#fff,#d4daee)"><div class="a" style="left:2px;top:4px;width:5px;height:1px;background:#2b3a7d"></div></div>
<div class="t " style="left:281px;top:299px;color:#26336f;font-weight:bold;-webkit-text-stroke:0.3px;"><span style="letter-spacing:-0.344px">P</span><span style="letter-spacing:0.833px">ath</span><span style="letter-spacing:0.344px">:</span><span style="letter-spacing:-0.062px"> </span><span style="display:inline-block;width:113.00px;transform:scaleX(1.0333);transform-origin:0 0">HKLM\SOFTWARE\M</span><span style="letter-spacing:0.332px">icrosoft</span><span style="display:inline-block;width:17.00px;transform:scaleX(1.2651);transform-origin:0 0">\W</span><span style="letter-spacing:0.290px">indows </span><span style="display:inline-block;width:27.00px;transform:scaleX(1.0524);transform-origin:0 0">NT\C</span><span style="letter-spacing:0.703px">urrent</span><span style="letter-spacing:-0.344px">V</span><span style="letter-spacing:0.328px">ersion</span><span style="display:inline-block;width:17.00px;transform:scaleX(1.2651);transform-origin:0 0">\W</span><span style="letter-spacing:0.183px">inlogon</span><span style="display:inline-block;width:14.00px;transform:scaleX(1.2727);transform-origin:0 0">\N</span><span style="letter-spacing:0.556px">otify</span></div>
<div class="a" style="left:260px;top:317px;width:969px;height:18px;background:#ff96e6"></div>
<div class="a" style="left:260px;top:335px;width:969px;height:1px;background:#2b3a7d"></div>
<div class="a" style="left:263px;top:320px;width:11px;height:11px;border:1px solid;border-color:#7d85b2 #b4b8dc #b4b8dc #7d85b2;box-shadow:inset 1px 1px 0 #c9cce4;background:linear-gradient(135deg,#fff 45%,#d9daf0)"><svg class="a" style="left:0;top:0" width="9" height="9" viewBox="0 0 9 9"><path d="M1.5 4 L3.5 6 L7.5 2" fill="none" stroke="#4a4a4a" stroke-width="1.4"/></svg></div>
<svg class="a" style="left:279px;top:318px" width="13" height="16" viewBox="0 0 13 16"><path d="M0.5 0.5 H8.5 L12.5 4.5 V15.5 H0.5 Z" fill="#dbe9fb" stroke="#7d90b8"/><path d="M8.5 0.5 V4.5 H12.5" fill="#a8ccf5" stroke="#7d90b8"/><circle cx="4.8" cy="5.8" r="2.7" fill="#35a035"/><circle cx="4.3" cy="5.2" r="1" fill="#c8f0c0"/><circle cx="7.4" cy="9.8" r="2.9" fill="#e89a18"/><circle cx="7.2" cy="9.6" r="1" fill="#ffe080"/><path d="M0.5 15.5 H12.5" stroke="#5a6a90"/></svg>
<div class="t " style="left:294px;top:319px;color:#000;"><span style="letter-spacing:-1.562px">G</span><span style="letter-spacing:-0.019px">roup </span><span style="letter-spacing:-1.344px">P</span><span style="letter-spacing:-0.200px">olicy</span></div>
<div class="a" style="left:260px;top:336px;width:969px;height:18px;background:#ff96e6"></div>
<div class="a" style="left:260px;top:354px;width:969px;height:1px;background:#2b3a7d"></div>
<div class="a" style="left:263px;top:339px;width:11px;height:11px;border:1px solid;border-color:#7d85b2 #b4b8dc #b4b8dc #7d85b2;box-shadow:inset 1px 1px 0 #c9cce4;background:linear-gradient(135deg,#fff 45%,#d9daf0)"><svg class="a" style="left:0;top:0" width="9" height="9" viewBox="0 0 9 9"><path d="M1.5 4 L3.5 6 L7.5 2" fill="none" stroke="#4a4a4a" stroke-width="1.4"/></svg></div>
<svg class="a" style="left:279px;top:337px" width="13" height="16" viewBox="0 0 13 16"><path d="M0.5 0.5 H8.5 L12.5 4.5 V15.5 H0.5 Z" fill="#dbe9fb" stroke="#7d90b8"/><path d="M8.5 0.5 V4.5 H12.5" fill="#a8ccf5" stroke="#7d90b8"/><circle cx="4.8" cy="5.8" r="2.7" fill="#35a035"/><circle cx="4.3" cy="5.2" r="1" fill="#c8f0c0"/><circle cx="7.4" cy="9.8" r="2.9" fill="#e89a18"/><circle cx="7.2" cy="9.6" r="1" fill="#ffe080"/><path d="M0.5 15.5 H12.5" stroke="#5a6a90"/></svg>
<div class="t " style="left:294px;top:338px;color:#000;"><span style="letter-spacing:-0.938px">H</span><span style="letter-spacing:-0.031px">ints</span></div>
<div class="a" style="left:260px;top:355px;width:969px;height:18px;background:#c8ffc8"></div>
<div class="a" style="left:260px;top:373px;width:969px;height:1px;background:#2b3a7d"></div>
<div class="a" style="left:263px;top:358px;width:11px;height:11px;border:1px solid;border-color:#7d85b2 #b4b8dc #b4b8dc #7d85b2;box-shadow:inset 1px 1px 0 #c9cce4;background:linear-gradient(135deg,#fff 45%,#d9daf0)"><svg class="a" style="left:0;top:0" width="9" height="9" viewBox="0 0 9 9"><path d="M1.5 4 L3.5 6 L7.5 2" fill="none" stroke="#4a4a4a" stroke-width="1.4"/></svg></div>
<svg class="a" style="left:278px;top:360px" width="15" height="9" viewBox="0 0 15 9" shape-rendering="crispEdges"><rect x="1" y="1" width="14" height="8" fill="#002400"/><rect x="0" y="0" width="14" height="8" fill="#0f0"/><rect x="0" y="3" width="1" height="2" fill="#003000"/><rect x="13" y="3" width="1" height="2" fill="#003000"/><rect x="2" y="2" width="10" height="4" fill="#0a7a0a" opacity=".6"/></svg>
<div class="t " style="left:294px;top:357px;color:#000;"><span style="letter-spacing:-1.344px">S</span><span style="letter-spacing:-0.500px">c</span><span style="letter-spacing:-0.938px">C</span><span style="letter-spacing:0.385px">ert</span><span style="letter-spacing:-1.344px">P</span><span style="letter-spacing:0.031px">rop</span></div>
<div class="a" style="left:260px;top:374px;width:969px;height:18px;background:#ecedf3"></div>
<div class="a" style="left:260px;top:392px;width:969px;height:1px;background:#2b3a7d"></div>
<div class="a" style="left:263px;top:377px;width:11px;height:11px;border:1px solid;border-color:#7d85b2 #b4b8dc #b4b8dc #7d85b2;box-shadow:inset 1px 1px 0 #c9cce4;background:linear-gradient(135deg,#fff 45%,#d9daf0)"><svg class="a" style="left:0;top:0" width="9" height="9" viewBox="0 0 9 9"><path d="M1.5 4 L3.5 6 L7.5 2" fill="none" stroke="#4a4a4a" stroke-width="1.4"/></svg></div>
<svg class="a" style="left:278px;top:379px" width="15" height="9" viewBox="0 0 15 9" shape-rendering="crispEdges"><rect x="1" y="1" width="14" height="8" fill="#002400"/><rect x="0" y="0" width="14" height="8" fill="#0f0"/><rect x="0" y="3" width="1" height="2" fill="#003000"/><rect x="13" y="3" width="1" height="2" fill="#003000"/><rect x="2" y="2" width="10" height="4" fill="#0a7a0a" opacity=".6"/></svg>
<div class="t " style="left:294px;top:376px;color:#000;"><span style="letter-spacing:-1.344px">S</span><span style="letter-spacing:-0.223px">chedule</span></div>
<div class="a" style="left:260px;top:393px;width:969px;height:18px;background:#c8ffc8"></div>
<div class="a" style="left:260px;top:411px;width:969px;height:1px;background:#2b3a7d"></div>
<div class="a" style="left:263px;top:396px;width:11px;height:11px;border:1px solid;border-color:#7d85b2 #b4b8dc #b4b8dc #7d85b2;box-shadow:inset 1px 1px 0 #c9cce4;background:linear-gradient(135deg,#fff 45%,#d9daf0)"><svg class="a" style="left:0;top:0" width="9" height="9" viewBox="0 0 9 9"><path d="M1.5 4 L3.5 6 L7.5 2" fill="none" stroke="#4a4a4a" stroke-width="1.4"/></svg></div>
<svg class="a" style="left:278px;top:398px" width="15" height="9" viewBox="0 0 15 9" shape-rendering="crispEdges"><rect x="1" y="1" width="14" height="8" fill="#002400"/><rect x="0" y="0" width="14" height="8" fill="#0f0"/><rect x="0" y="3" width="1" height="2" fill="#003000"/><rect x="13" y="3" width="1" height="2" fill="#003000"/><rect x="2" y="2" width="10" height="4" fill="#0a7a0a" opacity=".6"/></svg>
<div class="t " style="left:294px;top:395px;color:#000;"><span style="letter-spacing:-1.344px">S</span><span style="letter-spacing:-0.250px">ens</span><span style="letter-spacing:-1.125px">L</span><span style="letter-spacing:-0.125px">ogn</span></div>
<div class="a" style="left:260px;top:412px;width:969px;height:18px;background:#fff"></div>
<div class="a" style="left:260px;top:430px;width:969px;height:1px;background:#2b3a7d"></div>
<div class="a" style="left:263px;top:415px;width:11px;height:11px;border:1px solid;border-color:#7d85b2 #b4b8dc #b4b8dc #7d85b2;box-shadow:inset 1px 1px 0 #c9cce4;background:linear-gradient(135deg,#fff 45%,#d9daf0)"><svg class="a" style="left:0;top:0" width="9" height="9" viewBox="0 0 9 9"><path d="M1.5 4 L3.5 6 L7.5 2" fill="none" stroke="#4a4a4a" stroke-width="1.4"/></svg></div>
<svg class="a" style="left:279px;top:413px" width="13" height="16" viewBox="0 0 13 16"><path d="M0.5 0.5 H8.5 L12.5 4.5 V15.5 H0.5 Z" fill="#dbe9fb" stroke="#7d90b8"/><path d="M8.5 0.5 V4.5 H12.5" fill="#a8ccf5" stroke="#7d90b8"/><circle cx="4.8" cy="5.8" r="2.7" fill="#35a035"/><circle cx="4.3" cy="5.2" r="1" fill="#c8f0c0"/><circle cx="7.4" cy="9.8" r="2.9" fill="#e89a18"/><circle cx="7.2" cy="9.6" r="1" fill="#ffe080"/><path d="M0.5 15.5 H12.5" stroke="#5a6a90"/></svg>
<div class="t " style="left:294px;top:414px;color:#000;"><span style="display:inline-block;width:18.00px;transform:scaleX(0.8409);transform-origin:0 0">TPS</span><span style="letter-spacing:0.000px">vc</span></div>
<div class="a" style="left:260px;top:431px;width:969px;height:18px;background:#c8ffc8"></div>
<div class="a" style="left:260px;top:449px;width:969px;height:1px;background:#2b3a7d"></div>
<div class="a" style="left:263px;top:434px;width:11px;height:11px;border:1px solid;border-color:#7d85b2 #b4b8dc #b4b8dc #7d85b2;box-shadow:inset 1px 1px 0 #c9cce4;background:linear-gradient(135deg,#fff 45%,#d9daf0)"><svg class="a" style="left:0;top:0" width="9" height="9" viewBox="0 0 9 9"><path d="M1.5 4 L3.5 6 L7.5 2" fill="none" stroke="#4a4a4a" stroke-width="1.4"/></svg></div>
<svg class="a" style="left:279px;top:432px" width="13" height="16" viewBox="0 0 13 16"><path d="M0.5 0.5 H8.5 L12.5 4.5 V15.5 H0.5 Z" fill="#dbe9fb" stroke="#7d90b8"/><path d="M8.5 0.5 V4.5 H12.5" fill="#a8ccf5" stroke="#7d90b8"/><circle cx="4.8" cy="5.8" r="2.7" fill="#35a035"/><circle cx="4.3" cy="5.2" r="1" fill="#c8f0c0"/><circle cx="7.4" cy="9.8" r="2.9" fill="#e89a18"/><circle cx="7.2" cy="9.6" r="1" fill="#ffe080"/><path d="M0.5 15.5 H12.5" stroke="#5a6a90"/></svg>
<div class="t " style="left:294px;top:433px;color:#000;"><span style="letter-spacing:-0.034px">crypt32chain</span></div>
<div class="a" style="left:260px;top:450px;width:969px;height:18px;background:#c8ffc8"></div>
<div class="a" style="left:260px;top:468px;width:969px;height:1px;background:#2b3a7d"></div>
<div class="a" style="left:263px;top:453px;width:11px;height:11px;border:1px solid;border-color:#7d85b2 #b4b8dc #b4b8dc #7d85b2;box-shadow:inset 1px 1px 0 #c9cce4;background:linear-gradient(135deg,#fff 45%,#d9daf0)"><svg class="a" style="left:0;top:0" width="9" height="9" viewBox="0 0 9 9"><path d="M1.5 4 L3.5 6 L7.5 2" fill="none" stroke="#4a4a4a" stroke-width="1.4"/></svg></div>
<svg class="a" style="left:279px;top:451px" width="13" height="16" viewBox="0 0 13 16"><path d="M0.5 0.5 H8.5 L12.5 4.5 V15.5 H0.5 Z" fill="#dbe9fb" stroke="#7d90b8"/><path d="M8.5 0.5 V4.5 H12.5" fill="#a8ccf5" stroke="#7d90b8"/><circle cx="4.8" cy="5.8" r="2.7" fill="#35a035"/><circle cx="4.3" cy="5.2" r="1" fill="#c8f0c0"/><circle cx="7.4" cy="9.8" r="2.9" fill="#e89a18"/><circle cx="7.2" cy="9.6" r="1" fill="#ffe080"/><path d="M0.5 15.5 H12.5" stroke="#5a6a90"/></svg>
<div class="t " style="left:294px;top:452px;color:#000;"><span style="letter-spacing:0.230px">cryptnet</span></div>
<div class="a" style="left:260px;top:469px;width:969px;height:18px;background:#c8ffc8"></div>
<div class="a" style="left:260px;top:487px;width:969px;height:1px;background:#2b3a7d"></div>
<div class="a" style="left:263px;top:472px;width:11px;height:11px;border:1px solid;border-color:#7d85b2 #b4b8dc #b4b8dc #7d85b2;box-shadow:inset 1px 1px 0 #c9cce4;background:linear-gradient(135deg,#fff 45%,#d9daf0)"><svg class="a" style="left:0;top:0" width="9" height="9" viewBox="0 0 9 9"><path d="M1.5 4 L3.5 6 L7.5 2" fill="none" stroke="#4a4a4a" stroke-width="1.4"/></svg></div>
<svg class="a" style="left:277px;top:471px" width="16" height="15" viewBox="0 0 16 15"><path d="M5.5 3 V1.5 H10.5 V3" fill="none" stroke="#5c5630" stroke-width="1.4"/><rect x="0.5" y="3" width="15" height="10.5" rx="1.5" fill="#a89c5e" stroke="#6e6636"/><rect x="1" y="3.5" width="14" height="3" fill="#c4b97c"/><rect x="7" y="6" width="2" height="2" fill="#e8e0b0"/><rect x="0.5" y="13" width="15" height="1.5" fill="#3c3818"/></svg>
<div class="t " style="left:294px;top:471px;color:#000;"><span style="letter-spacing:-0.417px">cscdll</span></div>
<div class="a" style="left:260px;top:488px;width:969px;height:18px;background:#c8ffc8"></div>
<div class="a" style="left:260px;top:506px;width:969px;height:1px;background:#2b3a7d"></div>
<div class="a" style="left:263px;top:491px;width:11px;height:11px;border:1px solid;border-color:#7d85b2 #b4b8dc #b4b8dc #7d85b2;box-shadow:inset 1px 1px 0 #c9cce4;background:linear-gradient(135deg,#fff 45%,#d9daf0)"><svg class="a" style="left:0;top:0" width="9" height="9" viewBox="0 0 9 9"><path d="M1.5 4 L3.5 6 L7.5 2" fill="none" stroke="#4a4a4a" stroke-width="1.4"/></svg></div>
<svg class="a" style="left:279px;top:489px" width="13" height="16" viewBox="0 0 13 16"><path d="M0.5 0.5 H8.5 L12.5 4.5 V15.5 H0.5 Z" fill="#dbe9fb" stroke="#7d90b8"/><path d="M8.5 0.5 V4.5 H12.5" fill="#a8ccf5" stroke="#7d90b8"/><circle cx="4.8" cy="5.8" r="2.7" fill="#35a035"/><circle cx="4.3" cy="5.2" r="1" fill="#c8f0c0"/><circle cx="7.4" cy="9.8" r="2.9" fill="#e89a18"/><circle cx="7.2" cy="9.6" r="1" fill="#ffe080"/><path d="M0.5 15.5 H12.5" stroke="#5a6a90"/></svg>
<div class="t " style="left:294px;top:490px;color:#000;"><span style="letter-spacing:0.086px">sclgntfy</span></div>
<div class="a" style="left:260px;top:507px;width:969px;height:18px;background:#c8ffc8"></div>
<div class="a" style="left:260px;top:525px;width:969px;height:1px;background:#2b3a7d"></div>
<div class="a" style="left:263px;top:510px;width:11px;height:11px;border:1px solid;border-color:#7d85b2 #b4b8dc #b4b8dc #7d85b2;box-shadow:inset 1px 1px 0 #c9cce4;background:linear-gradient(135deg,#fff 45%,#d9daf0)"><svg class="a" style="left:0;top:0" width="9" height="9" viewBox="0 0 9 9"><path d="M1.5 4 L3.5 6 L7.5 2" fill="none" stroke="#4a4a4a" stroke-width="1.4"/></svg></div>
<svg class="a" style="left:278px;top:512px" width="15" height="9" viewBox="0 0 15 9" shape-rendering="crispEdges"><rect x="1" y="1" width="14" height="8" fill="#002400"/><rect x="0" y="0" width="14" height="8" fill="#0f0"/><rect x="0" y="3" width="1" height="2" fill="#003000"/><rect x="13" y="3" width="1" height="2" fill="#003000"/><rect x="2" y="2" width="10" height="4" fill="#0a7a0a" opacity=".6"/></svg>
<div class="t " style="left:294px;top:509px;color:#000;"><span style="letter-spacing:0.049px">termsrv</span></div>
<div class="a" style="left:260px;top:526px;width:969px;height:18px;background:#c8ffc8"></div>
<div class="a" style="left:260px;top:544px;width:969px;height:1px;background:#2b3a7d"></div>
<div class="a" style="left:263px;top:529px;width:11px;height:11px;border:1px solid;border-color:#7d85b2 #b4b8dc #b4b8dc #7d85b2;box-shadow:inset 1px 1px 0 #c9cce4;background:linear-gradient(135deg,#fff 45%,#d9daf0)"><svg class="a" style="left:0;top:0" width="9" height="9" viewBox="0 0 9 9"><path d="M1.5 4 L3.5 6 L7.5 2" fill="none" stroke="#4a4a4a" stroke-width="1.4"/></svg></div>
<svg class="a" style="left:278px;top:531px" width="15" height="9" viewBox="0 0 15 9" shape-rendering="crispEdges"><rect x="1" y="1" width="14" height="8" fill="#002400"/><rect x="0" y="0" width="14" height="8" fill="#0f0"/><rect x="0" y="3" width="1" height="2" fill="#003000"/><rect x="13" y="3" width="1" height="2" fill="#003000"/><rect x="2" y="2" width="10" height="4" fill="#0a7a0a" opacity=".6"/></svg>
<div class="t " style="left:294px;top:528px;color:#000;"><span style="letter-spacing:-0.208px">wlballoon</span></div>
<div class="a" style="left:240px;top:544px;width:20px;height:1px;background:#2b3a7d"></div>
<div class="sbv" style="left:1229px;top:60px;width:17px;height:505px"></div>
<div class="sbtn" style="left:1229px;top:60px;width:17px;height:17px"><svg class="a" style="left:50%;top:50%;margin:-3px 0 0 -4px" width="7" height="5" viewBox="0 0 7 5"><path d="M0 4.4 L3.5 0.6 L7 4.4 L5.4 4.6 L3.5 3.1 L1.6 4.6 Z" fill="#3a3a40"/></svg></div>
<div class="thv" style="left:1229px;top:116px;width:17px;height:431px"></div>
<div class="a" style="left:1234px;top:329px;width:7px;height:1px;background:linear-gradient(90deg,#2e2e33,#6e6e74 70%,#a0a0a6)"></div>
<div class="a" style="left:1234px;top:332px;width:7px;height:1px;background:linear-gradient(90deg,#2e2e33,#6e6e74 70%,#a0a0a6)"></div>
<div class="a" style="left:1234px;top:335px;width:7px;height:1px;background:linear-gradient(90deg,#2e2e33,#6e6e74 70%,#a0a0a6)"></div>
<div class="sbtn" style="left:1229px;top:548px;width:17px;height:17px"><svg class="a" style="left:50%;top:50%;margin:-2px 0 0 -4px" width="7" height="4" viewBox="0 0 7 4"><path d="M0 0.2 H7 L3.5 4 Z" fill="#3c3c42"/></svg></div>
<div class="sbh" style="left:240px;top:565px;width:1006px;height:17px"></div>
<div class="sbtn" style="left:241px;top:565px;width:17px;height:17px"><svg class="a" style="left:50%;top:50%;margin:-4px 0 0 -3px" width="4" height="7" viewBox="0 0 4 7"><path d="M3.8 0 V7 L0 3.5 Z" fill="#3c3c42"/></svg></div>
<div class="thh" style="left:258px;top:565px;width:903px;height:17px"></div>
<div class="sbtn" style="left:1212px;top:565px;width:17px;height:17px"><svg class="a" style="left:50%;top:50%;margin:-4px 0 0 -2px" width="4" height="7" viewBox="0 0 4 7"><path d="M0.2 0 V7 L4 3.5 Z" fill="#3c3c42"/></svg></div>
<div class="a" style="left:1251px;top:58px;width:21px;height:49px;background:linear-gradient(90deg,#f3f3f8,#eeeff4)"></div>
<div class="a" style="left:1251px;top:107px;width:21px;height:2px;background:#3a4a8a"></div>
<div class="t" style="left:1255px;top:63px;transform-origin:0 0;transform:translate(13px,0) rotate(90deg);letter-spacing:-0.292px">Legend</div>
<div class="a" style="left:1251px;top:122px;width:21px;height:52px;background:linear-gradient(90deg,#f3f3f8,#eeeff4)"></div>
<div class="a" style="left:1251px;top:174px;width:21px;height:2px;background:#3a4a8a"></div>
<div class="t" style="left:1255px;top:127px;transform-origin:0 0;transform:translate(13px,0) rotate(90deg);letter-spacing:-0.223px">Settings</div>
<div class="a" style="left:5px;top:591px;width:1244px;height:17px;background:#767e9f"></div>
<div class="t " style="left:9px;top:594px;color:#acadb8;font-weight:bold;-webkit-text-stroke:0.3px;"><span style="letter-spacing:0.062px">D</span><span style="letter-spacing:0.474px">etails</span></div>
<div class="a" style="left:5px;top:608px;width:1243px;height:2px;background:#f9f9fc"></div>
<div class="a" style="left:1219px;top:593px;width:12px;height:12px;background:#fff"><svg class="a" style="left:2px;top:1px" width="8" height="10" viewBox="0 0 8 10" shape-rendering="crispEdges"><rect x="2" y="0" width="4" height="1" fill="#000"/><rect x="2" y="0" width="1" height="5" fill="#000"/><rect x="4" y="0" width="2" height="5" fill="#000"/><rect x="0" y="5" width="8" height="1" fill="#000"/><rect x="3" y="6" width="1" height="4" fill="#000"/></svg></div>
<div class="a" style="left:1233px;top:593px;width:13px;height:12px;background:#fff"><svg class="a" style="left:1px;top:1px" width="10" height="10" viewBox="0 0 10 10"><path d="M1.5 1.5 L8.5 8.5 M8.5 1.5 L1.5 8.5" stroke="#000" stroke-width="1.7"/></svg></div>
<div class="a" style="left:5px;top:610px;width:1244px;height:188px;background:#fff;border:1px solid #2b3a7d"></div>
<div class="a" style="left:6px;top:611px;width:1225px;height:17px;background:#c0c0c0"></div>
<div class="a" style="left:6px;top:628px;width:14px;height:168px;background:#c0c0c0"></div>
<div class="a" style="left:8px;top:615px;width:9px;height:9px;border:1px solid #000;background:#c0c0c0"><div class="a" style="left:1px;top:3px;width:5px;height:1px;background:#000"></div></div>
<div class="t " style="left:22px;top:613px;color:#a6a6a6;font-weight:bold;-webkit-text-stroke:0.3px;"><span style="letter-spacing:-0.562px">O</span><span style="letter-spacing:0.542px">bject </span><span style="letter-spacing:1.938px">I</span><span style="letter-spacing:0.556px">nformation</span></div>
<div class="a" style="left:20px;top:659px;width:1211px;height:1px;background:#c0c0c0"></div>
<div class="a" style="left:20px;top:676px;width:1211px;height:1px;background:#c0c0c0"></div>
<div class="a" style="left:20px;top:693px;width:1211px;height:1px;background:#c0c0c0"></div>
<div class="a" style="left:20px;top:710px;width:1211px;height:1px;background:#c0c0c0"></div>
<div class="a" style="left:20px;top:727px;width:1211px;height:1px;background:#c0c0c0"></div>
<div class="a" style="left:20px;top:744px;width:1211px;height:1px;background:#c0c0c0"></div>
<div class="a" style="left:20px;top:761px;width:1211px;height:1px;background:#c0c0c0"></div>
<div class="a" style="left:20px;top:778px;width:1211px;height:1px;background:#c0c0c0"></div>
<div class="a" style="left:20px;top:795px;width:1211px;height:1px;background:#c0c0c0"></div>
<div class="a" style="left:317px;top:628px;width:1px;height:168px;background:#c0c0c0"></div>
<div class="t " style="left:22px;top:638px;color:#000;"><span style="letter-spacing:0.938px">I</span><span style="letter-spacing:-0.250px">con</span></div>
<div class="t " style="left:22px;top:662px;color:#000;"><span style="letter-spacing:-1.344px">S</span><span style="letter-spacing:0.225px">tatus</span></div>
<div class="t " style="left:22px;top:679px;color:#000;"><span style="letter-spacing:-0.719px">F</span><span style="letter-spacing:-0.266px">ull </span><span style="letter-spacing:-1.344px">P</span><span style="letter-spacing:0.229px">ath</span></div>
<div class="t " style="left:22px;top:696px;color:#000;"><span style="letter-spacing:-1.344px">E</span><span style="letter-spacing:0.071px">xecute </span><span style="letter-spacing:-1.344px">P</span><span style="letter-spacing:-0.059px">arameters</span></div>
<div class="t " style="left:22px;top:713px;color:#000;"><span style="letter-spacing:-0.938px">N</span><span style="letter-spacing:-0.469px">ame</span></div>
<div class="t " style="left:22px;top:730px;color:#000;"><span style="letter-spacing:-0.938px">D</span><span style="letter-spacing:-0.109px">escription</span></div>
<div class="t " style="left:22px;top:747px;color:#000;"><span style="letter-spacing:-0.938px">C</span><span style="letter-spacing:-0.292px">omment</span></div>
<div class="t " style="left:22px;top:764px;color:#000;"><span style="letter-spacing:-0.938px">R</span><span style="letter-spacing:-0.042px">aw </span><span style="letter-spacing:-0.938px">R</span><span style="letter-spacing:0.066px">egistry </span><span style="letter-spacing:-1.344px">V</span><span style="letter-spacing:-0.203px">alue</span></div>
<div class="t " style="left:22px;top:781px;color:#000;"><span style="letter-spacing:-0.938px">R</span><span style="letter-spacing:-0.042px">aw </span><span style="letter-spacing:-0.938px">R</span><span style="letter-spacing:0.066px">egistry </span><span style="letter-spacing:-1.344px">P</span><span style="letter-spacing:-0.266px">aram</span></div>
<svg class="a" style="left:323px;top:636px" width="29" height="17" viewBox="0 0 29 17"><rect x="2" y="3" width="26.5" height="13.5" fill="#031803"/><path d="M0.5 0.5 H27.5 V5 A2.3 2.3 0 0 0 27.5 9.6 V14 H0.5 V9.6 A2.3 2.3 0 0 0 0.5 5 Z" fill="#00f400"/><text x="3.3" y="10.6" font-family="Liberation Sans" font-size="7.4" font-weight="bold" fill="#021002" letter-spacing="-0.1">Ticket</text></svg>
<div class="a" style="left:322px;top:661px;width:13px;height:13px;background:#c8ffc8;border:1px solid #000"></div>
<div class="t " style="left:340px;top:661px;color:#000;"><span style="letter-spacing:-0.719px">F</span><span style="letter-spacing:-0.161px">ile signed by </span><span style="letter-spacing:-1.156px">M</span><span style="letter-spacing:0.066px">icrosoft</span></div>
<div class="t " style="left:320px;top:679px;color:#000;"><span style="display:inline-block;width:77.00px;transform:scaleX(0.9617);transform-origin:0 0">C:\WINDOWS\S</span><span style="letter-spacing:-0.085px">ystem32</span><span style="letter-spacing:0.938px">\</span><span style="letter-spacing:0.089px">wlnotify.dll</span></div>
<div class="t " style="left:320px;top:713px;color:#000;"><span style="letter-spacing:-1.344px">S</span><span style="letter-spacing:-0.223px">chedule</span></div>
<div class="t " style="left:320px;top:764px;color:#000;"><span style="letter-spacing:0.089px">wlnotify.dll</span></div>
<div class="t " style="left:320px;top:781px;color:#000;"><span style="display:inline-block;width:98.00px;transform:scaleX(0.9092);transform-origin:0 0">HKLM\SOFTWARE\M</span><span style="letter-spacing:0.066px">icrosoft</span><span style="display:inline-block;width:14.00px;transform:scaleX(1.0419);transform-origin:0 0">\W</span><span style="letter-spacing:-0.188px">indows </span><span style="display:inline-block;width:24.00px;transform:scaleX(0.9354);transform-origin:0 0">NT\C</span><span style="letter-spacing:0.208px">urrent</span><span style="letter-spacing:-1.344px">V</span><span style="letter-spacing:-0.161px">ersion</span><span style="display:inline-block;width:14.00px;transform:scaleX(1.0419);transform-origin:0 0">\W</span><span style="letter-spacing:-0.214px">inlogon</span><span style="letter-spacing:0.000px">\N</span><span style="letter-spacing:0.362px">otify</span><span style="display:inline-block;width:10.00px;transform:scaleX(0.9610);transform-origin:0 0">\S</span><span style="letter-spacing:-0.203px">chedule,</span><span style="display:inline-block;width:24.00px;transform:scaleX(0.8533);transform-origin:0 0">DLLN</span><span style="letter-spacing:-0.469px">ame</span></div>
<div class="sbv" style="left:1231px;top:611px;width:17px;height:186px"></div>
<div class="sbtn" style="left:1231px;top:611px;width:17px;height:17px"><svg class="a" style="left:50%;top:50%;margin:-3px 0 0 -4px" width="7" height="5" viewBox="0 0 7 5"><path d="M0 4.4 L3.5 0.6 L7 4.4 L5.4 4.6 L3.5 3.1 L1.6 4.6 Z" fill="#3a3a40"/></svg></div>
<div class="thv" style="left:1231px;top:629px;width:17px;height:71px"></div>
<div class="a" style="left:1236px;top:661px;width:7px;height:1px;background:linear-gradient(90deg,#2e2e33,#6e6e74 70%,#a0a0a6)"></div>
<div class="a" style="left:1236px;top:664px;width:7px;height:1px;background:linear-gradient(90deg,#2e2e33,#6e6e74 70%,#a0a0a6)"></div>
<div class="a" style="left:1236px;top:667px;width:7px;height:1px;background:linear-gradient(90deg,#2e2e33,#6e6e74 70%,#a0a0a6)"></div>
<div class="sbtn" style="left:1231px;top:780px;width:17px;height:17px"><svg class="a" style="left:50%;top:50%;margin:-2px 0 0 -4px" width="7" height="4" viewBox="0 0 7 4"><path d="M0 0.2 H7 L3.5 4 Z" fill="#3c3c42"/></svg></div>
<div class="a" style="left:1112px;top:805px;width:73px;height:21px;border:1px solid #bdbec6;border-radius:3px;background:linear-gradient(#f7f7f9,#f0f0f4)"></div>
<svg class="a" style="left:1115px;top:806px" width="17" height="17" viewBox="0 0 16 16"><defs><radialGradient id="gok" cx=".4" cy=".3" r=".8"><stop offset="0" stop-color="#d6d6d6"/><stop offset="1" stop-color="#727272"/></radialGradient></defs><circle cx="8" cy="8" r="7.6" fill="url(#gok)"/><path d="M4.5 8 L7.2 10.8 L11.8 4.8" fill="none" stroke="#f4f4f4" stroke-width="2.2"/></svg>
<div class="t " style="left:1142px;top:810px;color:#a3a3a3;"><span style="letter-spacing:-0.344px">A</span><span style="letter-spacing:-0.047px">pply</span></div>
<div class="a" style="left:1198px;top:805px;width:73px;height:21px;border:1px solid #bdbec6;border-radius:3px;background:linear-gradient(#f7f7f9,#f0f0f4)"></div>
<svg class="a" style="left:1201px;top:806px" width="17" height="17" viewBox="0 0 16 16"><defs><radialGradient id="gx" cx=".4" cy=".3" r=".8"><stop offset="0" stop-color="#d6d6d6"/><stop offset="1" stop-color="#727272"/></radialGradient></defs><circle cx="8" cy="8" r="7.6" fill="url(#gx)"/><path d="M5 5 L11 11 M11 5 L5 11" fill="none" stroke="#f4f4f4" stroke-width="2.2"/></svg>
<div class="t " style="left:1225px;top:810px;color:#a3a3a3;"><span style="letter-spacing:-0.938px">R</span><span style="letter-spacing:0.306px">evert</span></div>
<div class="a" style="left:391px;top:219px;width:494px;height:405px;background:#1b1e2e"></div>
<div class="a" style="left:392px;top:220px;width:492px;height:403px;background:linear-gradient(90deg,#3a4060 0,#666d92 1px,#666d92 3px,#343a55 3px,#343a55 489px,#666d92 489px,#666d92 491px,#3a4060 492px)"></div>
<div class="a" style="left:393px;top:620px;width:490px;height:2px;background:#666d92"></div>
<div class="a" style="left:392px;top:220px;width:492px;height:21px;background:linear-gradient(#5a607a 0%,#3e435a 28%,#1e212f 58%,#15171f 95%,#0c0d12 100%)"></div>
<div class="t " style="left:394px;top:226px;color:#fff;font-weight:bold;-webkit-text-stroke:0.3px;"><span style="letter-spacing:-0.344px">S</span><span style="letter-spacing:0.525px">earch</span></div>
<div class="a" style="left:867px;top:226px;width:11px;height:11px;border:1px solid #f2c9b8;border-radius:2px;background:linear-gradient(135deg,#e88a68,#c8421c)"><svg class="a" style="left:1px;top:1px" width="7" height="7" viewBox="0 0 7 7"><path d="M1 1 L6 6 M6 1 L1 6" stroke="#fff" stroke-width="1.5"/></svg></div>
<div class="a" style="left:395px;top:241px;width:486px;height:379px;background:#ebecf2"></div>
<div class="a" style="left:400px;top:248px;width:477px;height:123px;border:1px solid #d3d4dc;border-radius:4px;"></div>
<div class="a" style="left:400px;top:380px;width:243px;height:78px;border:1px solid #d3d4dc;border-radius:4px;"></div>
<div class="a" style="left:406px;top:378px;width:64px;height:5px;background:#ebecf2"></div>
<div class="t " style="left:408px;top:374px;color:#a9abb8;"><span style="letter-spacing:-1.344px">S</span><span style="letter-spacing:-0.059px">earch from</span></div>
<div class="a" style="left:647px;top:380px;width:230px;height:78px;border:1px solid #d3d4dc;border-radius:4px;"></div>
<div class="a" style="left:653px;top:378px;width:84px;height:5px;background:#ebecf2"></div>
<div class="t " style="left:655px;top:374px;color:#a9abb8;"><span style="letter-spacing:-1.344px">S</span><span style="letter-spacing:-0.079px">earch direction</span></div>
<div class="a" style="left:400px;top:467px;width:477px;height:112px;border:1px solid #d3d4dc;border-radius:4px;"></div>
<div class="a" style="left:406px;top:465px;width:82px;height:5px;background:#ebecf2"></div>
<div class="t " style="left:408px;top:461px;color:#a9abb8;"><span style="letter-spacing:-1.344px">S</span><span style="letter-spacing:-0.098px">earch in group</span></div>
<div class="t " style="left:406px;top:255px;color:#000;"><span style="letter-spacing:-0.719px">F</span><span style="letter-spacing:-0.333px">ile</span><span style="letter-spacing:0.938px">/</span><span style="letter-spacing:0.141px">path</span><span style="letter-spacing:0.938px">:</span></div>
<div class="t " style="left:406px;top:283px;color:#000;"><span style="letter-spacing:-1.344px">K</span><span style="letter-spacing:0.188px">ey</span><span style="letter-spacing:0.938px">:</span></div>
<div class="t " style="left:406px;top:312px;color:#000;"><span style="letter-spacing:-1.344px">V</span><span style="letter-spacing:-0.203px">alue</span><span style="letter-spacing:0.938px">:</span></div>
<div class="t " style="left:406px;top:341px;color:#000;"><span style="letter-spacing:-0.938px">D</span><span style="letter-spacing:0.229px">ata</span><span style="letter-spacing:0.938px">:</span></div>
<div class="a" style="left:463px;top:254px;width:378px;height:23px;background:#fff;border:1px solid #a7a8b2;"></div>
<div class="a" style="left:469px;top:257px;width:25px;height:13px;background:#0a246a"></div>
<div class="t " style="left:470px;top:257px;color:#fff;"><span style="letter-spacing:-0.044px">virus</span></div>
<div class="a" style="left:463px;top:283px;width:378px;height:21px;background:#fff;border:1px solid #9299bd;"></div>
<div class="a" style="left:823px;top:284px;width:17px;height:19px;background:linear-gradient(#dcdcde,#c9c9cc);border-left:1px solid #a9abb8"><svg class="a" style="left:4px;top:9px" width="7" height="4" viewBox="0 0 7 4"><path d="M0 0 H7 L3.5 4 Z" fill="#0a1468"/></svg></div>
<div class="a" style="left:463px;top:311px;width:378px;height:23px;background:#fff;border:1px solid #a7a8b2;"></div>
<div class="a" style="left:463px;top:340px;width:378px;height:23px;background:#fff;border:1px solid #a7a8b2;"></div>
<div class="a" style="left:848px;top:255px;width:21px;height:21px;border:1px solid #b3b6f2;border-radius:3px;background:linear-gradient(#f2f2ff 0,#ececfd 45%,#d6d6f8 46%,#dcdcfa 100%)"></div>
<div class="a" style="left:853px;top:268px;width:1px;height:2px;background:#101020"></div>
<div class="a" style="left:857px;top:268px;width:1px;height:2px;background:#101020"></div>
<div class="a" style="left:861px;top:268px;width:1px;height:2px;background:#101020"></div>
<div class="a" style="left:406px;top:393px;width:12px;height:12px;border:1px solid #8c8c94;border-radius:50%;background:linear-gradient(135deg,#d4d4d8 10%,#fff 75%)"></div>
<div class="t " style="left:422px;top:393px;color:#000;"><span style="letter-spacing:-1.344px">B</span><span style="letter-spacing:-0.203px">egin</span></div>
<div class="a" style="left:406px;top:414px;width:12px;height:12px;border:1px solid #8c8c94;border-radius:50%;background:linear-gradient(135deg,#d4d4d8 10%,#fff 75%)"><div class="a" style="left:2px;top:2px;width:6px;height:6px;border-radius:50%;background:radial-gradient(circle at 45% 40%,#4ab4f0 0,#2a8ad8 35%,#12245c 72%)"></div></div>
<div class="t " style="left:422px;top:414px;color:#000;"><span style="letter-spacing:-0.938px">C</span><span style="letter-spacing:-0.076px">ursor position</span></div>
<div class="a" style="left:406px;top:435px;width:12px;height:12px;border:1px solid #b4b5bc;border-radius:50%;background:linear-gradient(135deg,#d4d4d8 10%,#fff 75%)"></div>
<div class="t " style="left:422px;top:435px;color:#a9abb8;"><span style="letter-spacing:-1.344px">E</span><span style="letter-spacing:-0.125px">nd</span></div>
<div class="a" style="left:653px;top:393px;width:12px;height:12px;border:1px solid #8c8c94;border-radius:50%;background:linear-gradient(135deg,#d4d4d8 10%,#fff 75%)"></div>
<div class="t " style="left:668px;top:393px;color:#000;"><span style="letter-spacing:-0.938px">U</span><span style="letter-spacing:-0.125px">p</span></div>
<div class="a" style="left:653px;top:414px;width:12px;height:12px;border:1px solid #8c8c94;border-radius:50%;background:linear-gradient(135deg,#d4d4d8 10%,#fff 75%)"><div class="a" style="left:2px;top:2px;width:6px;height:6px;border-radius:50%;background:radial-gradient(circle at 45% 40%,#4ab4f0 0,#2a8ad8 35%,#12245c 72%)"></div></div>
<div class="t " style="left:668px;top:414px;color:#000;"><span style="letter-spacing:-0.938px">D</span><span style="letter-spacing:-0.062px">own</span></div>
<div class="a" style="left:406px;top:482px;width:12px;height:12px;border:1px solid #8c8c94;border-radius:50%;background:linear-gradient(135deg,#d4d4d8 10%,#fff 75%)"><div class="a" style="left:2px;top:2px;width:6px;height:6px;border-radius:50%;background:radial-gradient(circle at 45% 40%,#4ab4f0 0,#2a8ad8 35%,#12245c 72%)"></div></div>
<div class="t " style="left:422px;top:482px;color:#000;"><span style="letter-spacing:-0.938px">C</span><span style="letter-spacing:0.086px">urrent group</span><span style="letter-spacing:0.938px">:</span></div>
<div class="t " style="left:424px;top:502px;color:#000;"><span style="letter-spacing:-0.375px">W</span><span style="letter-spacing:-0.214px">inlogon</span></div>
<div class="a" style="left:406px;top:523px;width:12px;height:12px;border:1px solid #8c8c94;border-radius:50%;background:linear-gradient(135deg,#d4d4d8 10%,#fff 75%)"></div>
<div class="t " style="left:422px;top:523px;color:#000;"><span style="letter-spacing:-0.938px">C</span><span style="letter-spacing:0.019px">urrent subgroup</span><span style="letter-spacing:0.938px">:</span></div>
<div class="t " style="left:424px;top:543px;color:#000;"><span style="display:inline-block;width:98.00px;transform:scaleX(0.9092);transform-origin:0 0">HKLM\SOFTWARE\M</span><span style="letter-spacing:0.066px">icrosoft</span><span style="display:inline-block;width:14.00px;transform:scaleX(1.0419);transform-origin:0 0">\W</span><span style="letter-spacing:-0.188px">indows </span><span style="display:inline-block;width:24.00px;transform:scaleX(0.9354);transform-origin:0 0">NT\C</span><span style="letter-spacing:0.208px">urrent</span><span style="letter-spacing:-1.344px">V</span><span style="letter-spacing:-0.161px">ersion</span><span style="display:inline-block;width:14.00px;transform:scaleX(1.0419);transform-origin:0 0">\W</span><span style="letter-spacing:-0.214px">inlogon</span><span style="letter-spacing:0.000px">\N</span><span style="letter-spacing:0.362px">otify</span></div>
<div class="a" style="left:406px;top:562px;width:12px;height:12px;border:1px solid #b4b5bc;border-radius:50%;background:linear-gradient(135deg,#d4d4d8 10%,#fff 75%)"></div>
<div class="t " style="left:422px;top:562px;color:#a9abb8;"><span style="letter-spacing:-0.344px">A</span><span style="letter-spacing:-0.438px">ll</span></div>
<div class="a" style="left:716px;top:585px;width:73px;height:21px;border:1px solid #2468d8;border-radius:3px;background:linear-gradient(#f3f3f5 0,#e7e7ea 48%,#d3d3d8 52%,#cacace 100%);box-shadow:inset 0 0 0 1px #4f9cf0"></div>
<div class="t " style="left:730px;top:590px;color:#000;"><span style="letter-spacing:-0.719px">F</span><span style="letter-spacing:0.055px">ind next</span></div>
<div class="a" style="left:803px;top:585px;width:73px;height:21px;border:1px solid #b5b8f2;border-radius:3px;background:linear-gradient(#f1f1ff 0,#e9e9fe 48%,#d8d8f8 52%,#dddcfa 100%)"></div>
<div class="t " style="left:822px;top:590px;color:#000;"><span style="letter-spacing:-0.938px">C</span><span style="letter-spacing:-0.263px">ancel</span></div></div></body></html>
